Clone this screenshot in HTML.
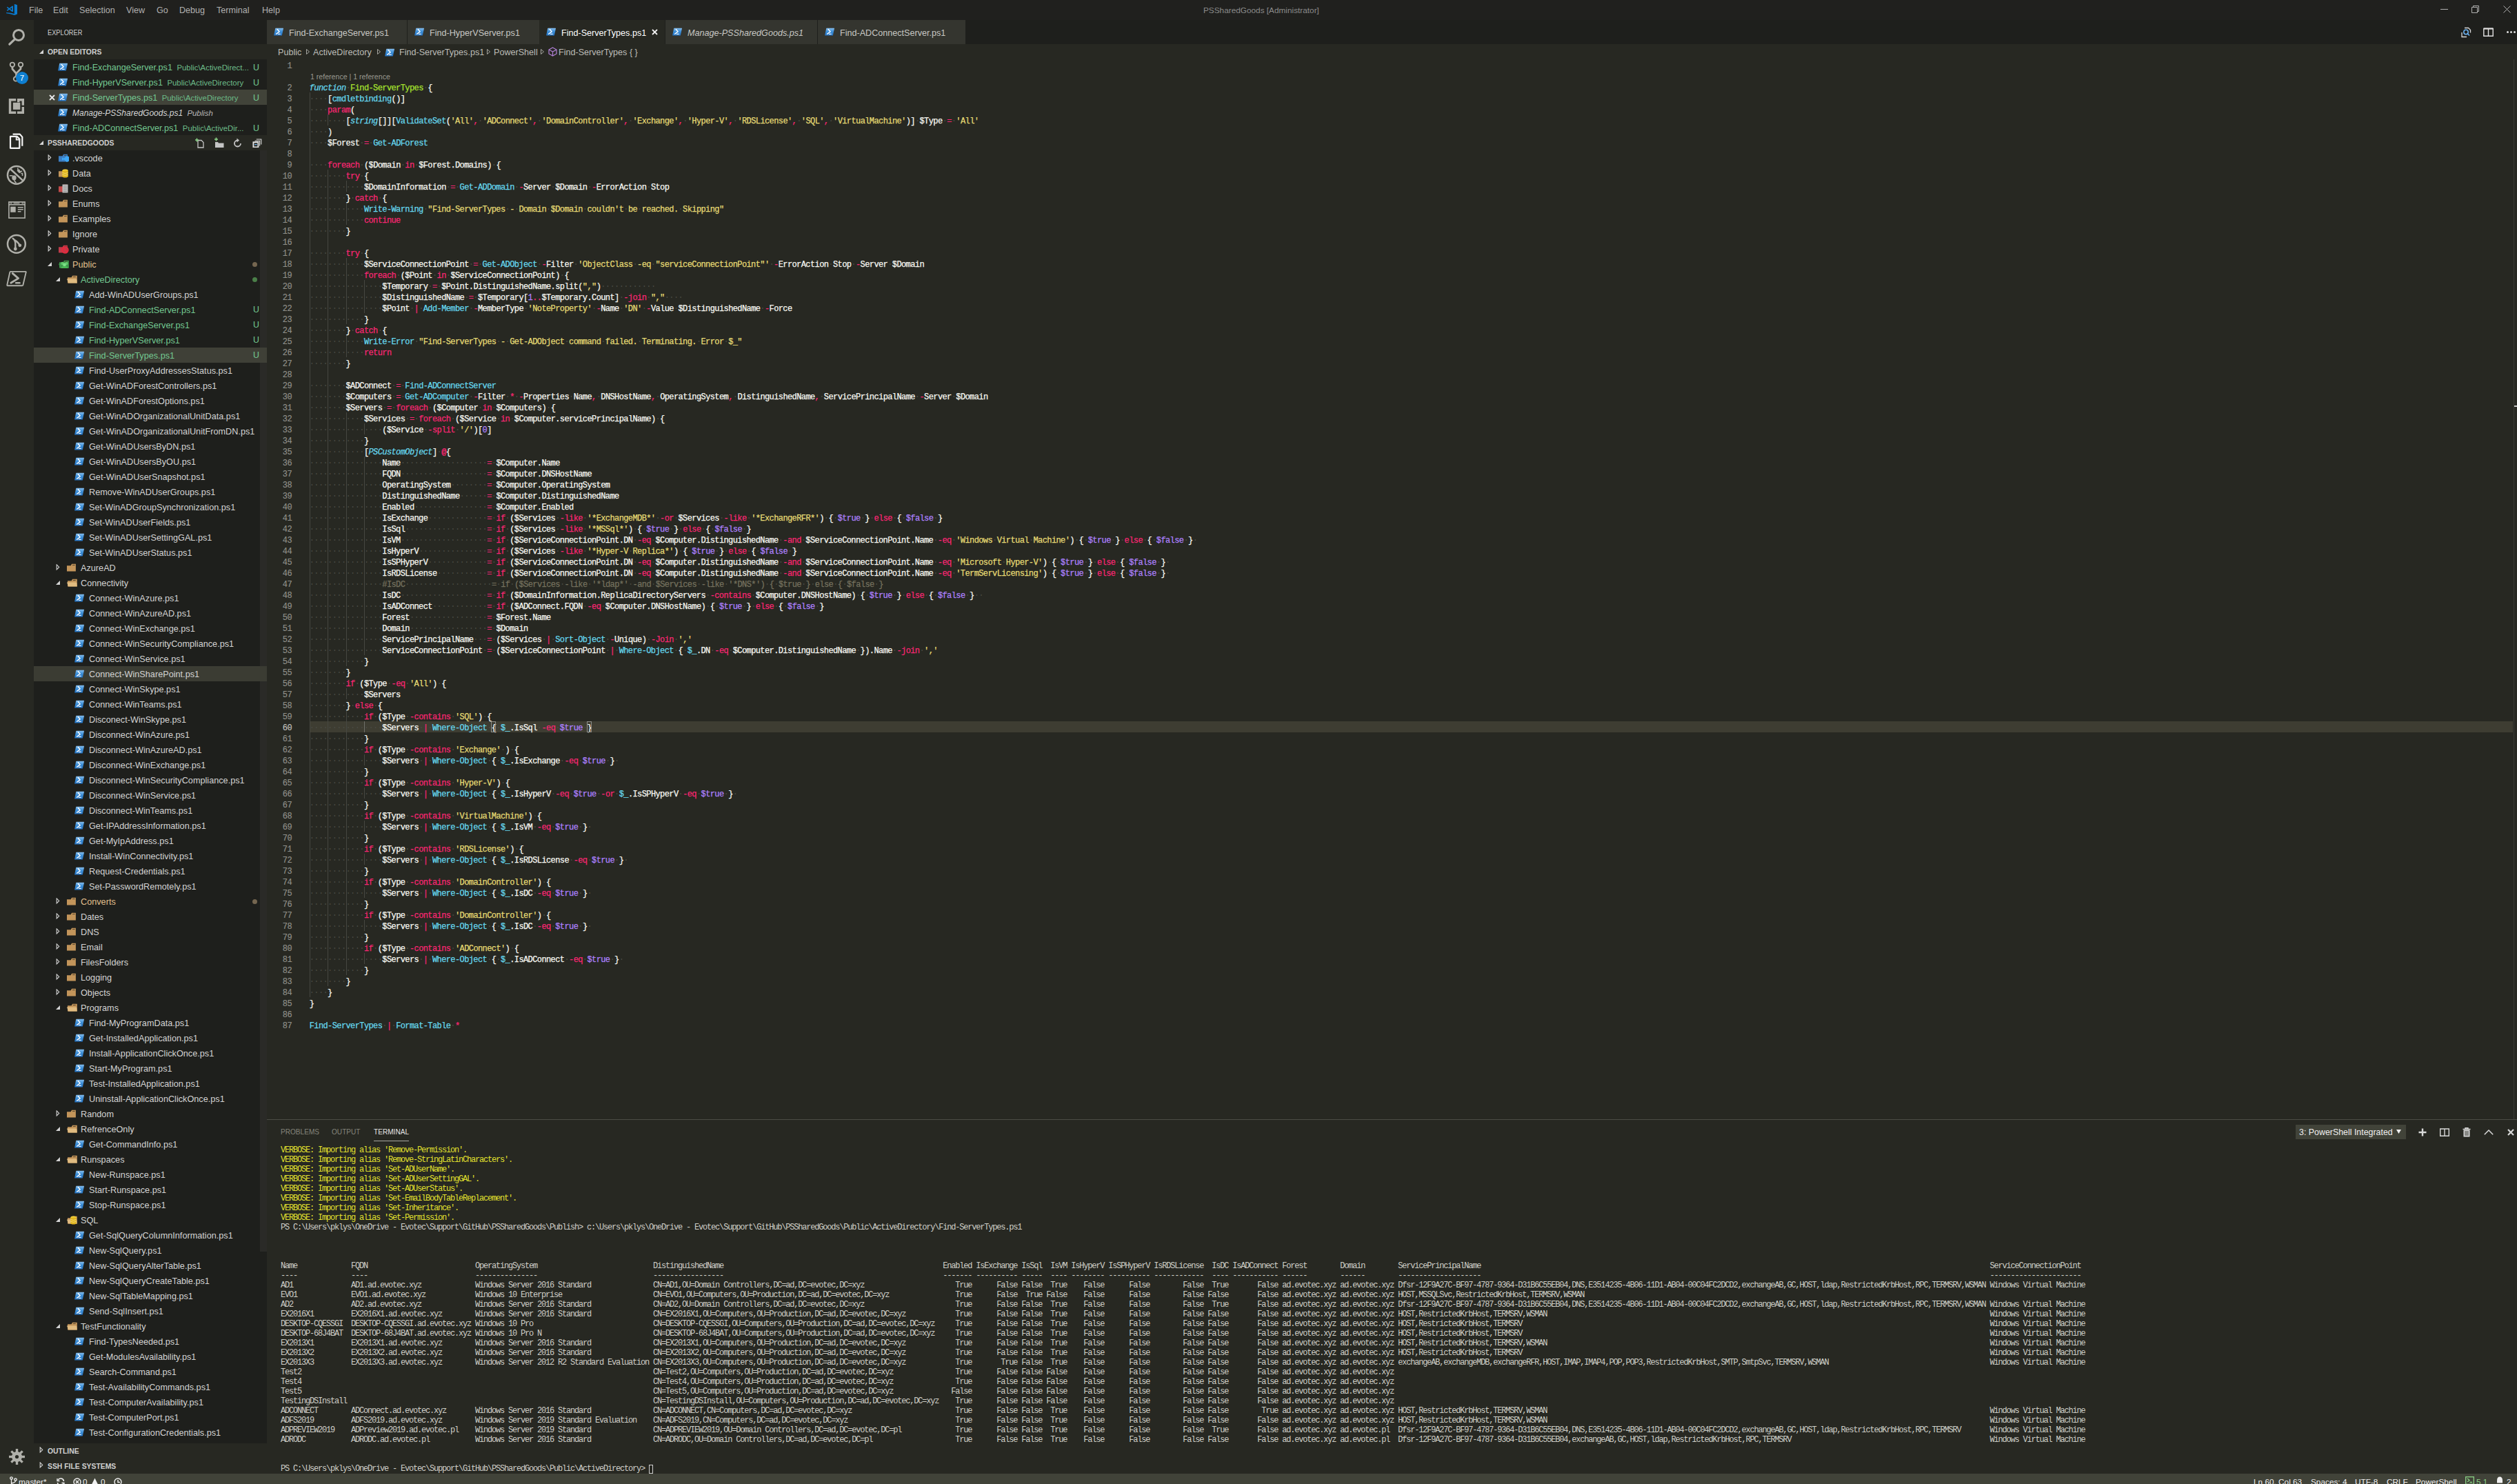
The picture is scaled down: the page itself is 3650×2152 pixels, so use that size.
<!DOCTYPE html><html><head><meta charset="utf-8"><title>VS Code</title><style>
*{margin:0;padding:0;box-sizing:border-box}
html,body{width:3650px;height:2152px;overflow:hidden;background:#272822}
body{position:relative;font-family:"Liberation Sans",sans-serif;color:#cccccc}
.a{position:absolute}
.ic{position:absolute;display:block}
.t{position:absolute;white-space:nowrap;line-height:16px}
.mono{font-family:"Liberation Mono",monospace}
i.w{font-style:normal;color:#4a4b44;-webkit-text-stroke:0}
.cl{position:absolute;left:0;height:16px;white-space:pre;line-height:16px}
.ln{position:absolute;width:40px;text-align:right;color:#90908a;white-space:pre;line-height:16px}
.tl{position:absolute;left:0;white-space:pre;line-height:14px;height:14px}
</style></head><body>
<svg width="0" height="0" style="position:absolute"><defs><linearGradient id="psg" x1="0" y1="0" x2="0" y2="1"><stop offset="0" stop-color="#86bdec"/><stop offset="0.45" stop-color="#3d8fd8"/><stop offset="1" stop-color="#2573c2"/></linearGradient></defs></svg>
<div class="a" style="left:0;top:0;width:3650px;height:29px;background:#20201e"></div>
<svg class="ic" style="left:5px;top:2px" width="25" height="25" viewBox="0 0 25 25"><path d="M15.8 3.9L17.3 4.3L20 5.3V18.6L16.3 19.9L15.8 19.6Z" fill="#0a7bd0"/><path d="M5.3 8.3L13 14.3M5.3 13.4L13 7.3" stroke="#0a7bd0" stroke-width="1.5"/><path d="M12.2 7L14 6.6V15L12.2 14.6Z" fill="#0a7bd0"/><path d="M4 16.3Q9 16 15.8 17.9L16.2 19.9Q9 18 4 17.2Z" fill="#0a7bd0"/></svg>
<div class="t" style="left:42px;top:7px;font-size:12.6px;color:#b0b0b0">File</div>
<div class="t" style="left:77px;top:7px;font-size:12.6px;color:#b0b0b0">Edit</div>
<div class="t" style="left:115px;top:7px;font-size:12.6px;color:#b0b0b0">Selection</div>
<div class="t" style="left:183px;top:7px;font-size:12.6px;color:#b0b0b0">View</div>
<div class="t" style="left:227px;top:7px;font-size:12.6px;color:#b0b0b0">Go</div>
<div class="t" style="left:260px;top:7px;font-size:12.6px;color:#b0b0b0">Debug</div>
<div class="t" style="left:314px;top:7px;font-size:12.6px;color:#b0b0b0">Terminal</div>
<div class="t" style="left:380px;top:7px;font-size:12.6px;color:#b0b0b0">Help</div>
<div class="t" style="left:1745px;top:7px;font-size:11.8px;color:#8c8c8c">PSSharedGoods [Administrator]</div>
<div class="a" style="left:3539px;top:13px;width:11px;height:1px;background:#b0b0b0"></div>
<svg class="ic" style="left:3584px;top:8px" width="11" height="11" viewBox="0 0 11 11"><path d="M0.5 2.5H8.5V10.5H0.5Z M2.5 2.5V0.5H10.5V8.5H8.5" fill="none" stroke="#b0b0b0" stroke-width="1"/></svg>
<svg class="ic" style="left:3630px;top:8px" width="11" height="11" viewBox="0 0 11 11"><path d="M0.5 0.5L10.5 10.5M10.5 0.5L0.5 10.5" stroke="#b0b0b0" stroke-width="1"/></svg>
<div class="a" style="left:0;top:29px;width:49px;height:2108px;background:#272822"></div>
<svg class="ic" style="left:0;top:0" width="49" height="430" viewBox="0 0 49 430"><circle cx="27" cy="50.9" r="7.5" fill="none" stroke="#b0b0aa" stroke-width="3"/><path d="M20.9 57.3L13.8 64.2" stroke="#b0b0aa" stroke-width="3.2" stroke-linecap="round"/><circle cx="17.9" cy="93.8" r="3.2" fill="none" stroke="#b0b0aa" stroke-width="1.9"/><circle cx="30" cy="93.8" r="3.2" fill="none" stroke="#b0b0aa" stroke-width="1.9"/><circle cx="23" cy="114.4" r="3.2" fill="none" stroke="#b0b0aa" stroke-width="1.9"/><path d="M17.9 97V100L23.5 106.5V111M30 97V100L23.5 106.5" fill="none" stroke="#b0b0aa" stroke-width="2.7" stroke-linejoin="round"/><path d="M12.8 143H23.2V146.4H16.2V161.6H23.2V165H12.8Z" fill="#b0b0aa"/><path d="M25 165H35V155H31.6V161.6H25Z" fill="#b0b0aa"/><path d="M25 143H35V152.8H31.6V146.4H28.4V148.2H25Z" fill="#b0b0aa"/><rect x="18.9" y="148.8" width="10.4" height="10.1" fill="#b0b0aa"/><path d="M15 197.9H24.6L28.3 201.6V214.8H15Z" fill="none" stroke="#f4f4f4" stroke-width="2.2" stroke-linejoin="round"/><path d="M23.7 198.5V202.6H28" fill="none" stroke="#f4f4f4" stroke-width="1.8"/><path d="M18.6 194.6H28.8L32.3 198.6V211.7" fill="none" stroke="#f4f4f4" stroke-width="2.2" stroke-linejoin="round"/><circle cx="23.9" cy="253.8" r="12.9" fill="none" stroke="#b0b0aa" stroke-width="2.5"/><path d="M15.5 245.5L33 261.6" stroke="#b0b0aa" stroke-width="2.5"/><ellipse cx="20.5" cy="257.8" rx="3.2" ry="3.6" fill="#b0b0aa"/><path d="M24.5 247.5L27.7 245.2L30.7 249.5L28 251.3Z" fill="#b0b0aa"/><path d="M13.8 254.8H18.5M25.7 243.5L26 247M30.5 251.5H32.5V255M20.5 261.5L23.5 265.5M28.5 250L32 247.8" stroke="#b0b0aa" stroke-width="1.5" fill="none"/><rect x="12.9" y="292.9" width="23.2" height="23.2" fill="none" stroke="#b0b0aa" stroke-width="1.6"/><path d="M12.9 296.8H36.1" stroke="#b0b0aa" stroke-width="1.6"/><path d="M14.5 294.7H17.5M19.5 294.7H28.5M31.5 294.7H34.5" stroke="#b0b0aa" stroke-width="1.3"/><rect x="15.2" y="299.7" width="7.5" height="8.1" fill="#b0b0aa"/><path d="M25.8 300.7H33.8M25.8 303.8H33.8M25.8 306.8H30.5" stroke="#b0b0aa" stroke-width="1.5"/><circle cx="23.9" cy="353.8" r="12.9" fill="none" stroke="#b0b0aa" stroke-width="2.5"/><path d="M18.7 345.7Q22.5 348.5 22.3 354V361M20.8 347.8Q25.5 350 28.8 355.8" fill="none" stroke="#b0b0aa" stroke-width="2.4" stroke-linecap="round"/><circle cx="22.3" cy="361" r="2.4" fill="#b0b0aa"/><circle cx="28.8" cy="355.8" r="2.4" fill="#b0b0aa"/><path d="M15 393.9H37Q38 393.9 37.7 394.9L33.4 413.2Q33.1 414.2 32.1 414.2H11Q10 414.2 10.3 413.2L14.3 394.9Q14.6 393.9 15 393.9Z" fill="none" stroke="#b0b0aa" stroke-width="1.9"/><path d="M18.2 396.4L26.6 403.6L15.8 410.3" fill="none" stroke="#b0b0aa" stroke-width="2.8" stroke-linecap="round" stroke-linejoin="round"/><path d="M23.2 410.3H28.4" stroke="#b0b0aa" stroke-width="2.6" stroke-linecap="round"/></svg>
<div class="a" style="left:23px;top:104px;width:18px;height:18px;border-radius:50%;background:#0e7fd1;color:#fff;font-size:11.5px;text-align:center;line-height:18px">7</div>
<svg class="ic" style="left:13px;top:2101px" width="23" height="23" viewBox="0 0 23 23"><path d="M9.5 1H13.5L14 4L16.5 5.3L19 3.5L21.5 6L19.7 8.5L20.8 11L23 11.5V15.5L20 16L18.8 18.5L20.5 21L18 23.5L15.5 21.7L13 22.8L12.5 25" fill="none"/><circle cx="11.5" cy="11.5" r="7.5" fill="#b0b0aa"/><circle cx="11.5" cy="11.5" r="2.6" fill="#272822"/><rect x="9.8" y="0" width="3.4" height="5" fill="#b0b0aa" transform="rotate(0 11.5 11.5)"/><rect x="9.8" y="0" width="3.4" height="5" fill="#b0b0aa" transform="rotate(45 11.5 11.5)"/><rect x="9.8" y="0" width="3.4" height="5" fill="#b0b0aa" transform="rotate(90 11.5 11.5)"/><rect x="9.8" y="0" width="3.4" height="5" fill="#b0b0aa" transform="rotate(135 11.5 11.5)"/><rect x="9.8" y="0" width="3.4" height="5" fill="#b0b0aa" transform="rotate(180 11.5 11.5)"/><rect x="9.8" y="0" width="3.4" height="5" fill="#b0b0aa" transform="rotate(225 11.5 11.5)"/><rect x="9.8" y="0" width="3.4" height="5" fill="#b0b0aa" transform="rotate(270 11.5 11.5)"/><rect x="9.8" y="0" width="3.4" height="5" fill="#b0b0aa" transform="rotate(315 11.5 11.5)"/></svg>
<div class="a" style="left:49px;top:29px;width:338px;height:2108px;background:#1e1f1c"></div>
<div class="t" style="left:69px;top:39px;font-size:11px;color:#cfcfcf;transform:scaleX(0.84);transform-origin:0 0">EXPLORER</div>
<div class="a" style="left:49px;top:64px;width:338px;height:22px;background:#272822"></div>
<svg class="ic" style="left:56px;top:71px" width="8" height="8" viewBox="0 0 8 8"><path d="M7 1V7H1Z" fill="#d4d4d4"/></svg>
<div class="t" style="left:69px;top:68px;font-size:10.4px;font-weight:bold;color:#d0d0d0">OPEN EDITORS</div>
<svg class="ic" style="left:84px;top:91px" width="15" height="13" viewBox="0 0 15 13"><path d="M2.6 0.8H13.6Q14.1 0.8 14 1.3L11.9 11.1Q11.8 11.6 11.3 11.6H0.6Q0.1 11.6 0.2 11.1L2.2 1.3Q2.3 0.8 2.6 0.8Z" fill="url(#psg)"/><path d="M5.2 2.5L8.1 5.8L3.6 9.3" stroke="#fff" stroke-width="1.4" fill="none" stroke-linecap="round"/><path d="M6.4 9.4H9.3" stroke="#e8f0f8" stroke-width="1.1" stroke-linecap="round"/></svg>
<div class="t" style="left:105px;top:90px;font-size:12.6px;color:#73c991">Find-ExchangeServer.ps1 <span style="font-size:11.4px;color:#6cbb88;margin-left:3px">Public\ActiveDirect...</span></div>
<div class="t" style="left:367px;top:90px;font-size:12.4px;color:#73c991">U</div>
<svg class="ic" style="left:84px;top:113px" width="15" height="13" viewBox="0 0 15 13"><path d="M2.6 0.8H13.6Q14.1 0.8 14 1.3L11.9 11.1Q11.8 11.6 11.3 11.6H0.6Q0.1 11.6 0.2 11.1L2.2 1.3Q2.3 0.8 2.6 0.8Z" fill="url(#psg)"/><path d="M5.2 2.5L8.1 5.8L3.6 9.3" stroke="#fff" stroke-width="1.4" fill="none" stroke-linecap="round"/><path d="M6.4 9.4H9.3" stroke="#e8f0f8" stroke-width="1.1" stroke-linecap="round"/></svg>
<div class="t" style="left:105px;top:112px;font-size:12.6px;color:#73c991">Find-HyperVServer.ps1 <span style="font-size:11.4px;color:#6cbb88;margin-left:3px">Public\ActiveDirectory</span></div>
<div class="t" style="left:367px;top:112px;font-size:12.4px;color:#73c991">U</div>
<div class="a" style="left:49px;top:130px;width:338px;height:22px;background:#414339"></div>
<svg class="ic" style="left:71px;top:137px" width="9" height="9" viewBox="0 0 9 9"><path d="M1 1L8 8M8 1L1 8" stroke="#e8e8e8" stroke-width="1.8"/></svg>
<svg class="ic" style="left:84px;top:135px" width="15" height="13" viewBox="0 0 15 13"><path d="M2.6 0.8H13.6Q14.1 0.8 14 1.3L11.9 11.1Q11.8 11.6 11.3 11.6H0.6Q0.1 11.6 0.2 11.1L2.2 1.3Q2.3 0.8 2.6 0.8Z" fill="url(#psg)"/><path d="M5.2 2.5L8.1 5.8L3.6 9.3" stroke="#fff" stroke-width="1.4" fill="none" stroke-linecap="round"/><path d="M6.4 9.4H9.3" stroke="#e8f0f8" stroke-width="1.1" stroke-linecap="round"/></svg>
<div class="t" style="left:105px;top:134px;font-size:12.6px;color:#73c991">Find-ServerTypes.ps1 <span style="font-size:11.4px;color:#6cbb88;margin-left:3px">Public\ActiveDirectory</span></div>
<div class="t" style="left:367px;top:134px;font-size:12.4px;color:#73c991">U</div>
<svg class="ic" style="left:84px;top:157px" width="15" height="13" viewBox="0 0 15 13"><path d="M2.6 0.8H13.6Q14.1 0.8 14 1.3L11.9 11.1Q11.8 11.6 11.3 11.6H0.6Q0.1 11.6 0.2 11.1L2.2 1.3Q2.3 0.8 2.6 0.8Z" fill="url(#psg)"/><path d="M5.2 2.5L8.1 5.8L3.6 9.3" stroke="#fff" stroke-width="1.4" fill="none" stroke-linecap="round"/><path d="M6.4 9.4H9.3" stroke="#e8f0f8" stroke-width="1.1" stroke-linecap="round"/></svg>
<div class="t" style="left:105px;top:156px;font-size:12px;color:#d4d4d4;font-style:italic">Manage-PSSharedGoods.ps1 <span style="font-size:11.4px;color:#b8b8b8;margin-left:3px">Publish</span></div>
<svg class="ic" style="left:84px;top:179px" width="15" height="13" viewBox="0 0 15 13"><path d="M2.6 0.8H13.6Q14.1 0.8 14 1.3L11.9 11.1Q11.8 11.6 11.3 11.6H0.6Q0.1 11.6 0.2 11.1L2.2 1.3Q2.3 0.8 2.6 0.8Z" fill="url(#psg)"/><path d="M5.2 2.5L8.1 5.8L3.6 9.3" stroke="#fff" stroke-width="1.4" fill="none" stroke-linecap="round"/><path d="M6.4 9.4H9.3" stroke="#e8f0f8" stroke-width="1.1" stroke-linecap="round"/></svg>
<div class="t" style="left:105px;top:178px;font-size:12.6px;color:#73c991">Find-ADConnectServer.ps1 <span style="font-size:11.4px;color:#6cbb88;margin-left:3px">Public\ActiveDir...</span></div>
<div class="t" style="left:367px;top:178px;font-size:12.4px;color:#73c991">U</div>
<div class="a" style="left:49px;top:196px;width:338px;height:22px;background:#272822"></div>
<svg class="ic" style="left:56px;top:203px" width="8" height="8" viewBox="0 0 8 8"><path d="M7 1V7H1Z" fill="#d4d4d4"/></svg>
<div class="t" style="left:69px;top:200px;font-size:10.4px;font-weight:bold;color:#d0d0d0">PSSHAREDGOODS</div>
<svg class="ic" style="left:281px;top:199px" width="16" height="16" viewBox="0 0 16 16"><path d="M6 4.5H11L14 7.5V15H6Z" fill="none" stroke="#c5c5c5" stroke-width="1.3"/><path d="M2 4H7M4.5 1.5V6.5" stroke="#89d185" stroke-width="1.6"/></svg>
<svg class="ic" style="left:310px;top:199px" width="16" height="16" viewBox="0 0 16 16"><path d="M2 7H6L7 8.5H14.5V15H2Z" fill="#c5c5c5"/><path d="M1 3H6M3.5 0.5V5.5" stroke="#89d185" stroke-width="1.6"/></svg>
<svg class="ic" style="left:337px;top:200px" width="15" height="15" viewBox="0 0 15 15"><path d="M12 8A4.5 4.5 0 1 1 7.5 3.5" fill="none" stroke="#c5c5c5" stroke-width="1.8"/><path d="M6.5 0.5L10 3.5L6.5 6.5Z" fill="#c5c5c5"/></svg>
<svg class="ic" style="left:366px;top:200px" width="14" height="14" viewBox="0 0 14 14"><path d="M1.4 6.2H8.4V13.4H1.4Z" fill="none" stroke="#e0e0e0" stroke-width="1.9"/><path d="M3.6 4.2H10.6V11.6M5.8 2H12.8V9.4" fill="none" stroke="#e0e0e0" stroke-width="1.1"/><path d="M3.3 9.6H6.6" stroke="#75beff" stroke-width="1.3"/></svg>
<div class="a" style="left:377px;top:218px;width:10px;height:1597px;background:#2a2a27"></div>
<svg class="ic" style="left:69px;top:224px" width="8" height="10" viewBox="0 0 8 10"><path d="M1.2 0.9L4.7 4.4L1.2 7.9Z" fill="none" stroke="#d4d4d4" stroke-width="1.1"/></svg>
<svg class="ic" style="left:85px;top:223px" width="14" height="13" viewBox="0 0 14 13"><path d="M0 3.2H5.6L7.1 0.8H12.9V11.4H0Z" fill="#3d7fc4"/><path d="M8 2.6H11.7" stroke="#4a3c28" stroke-width="0.9"/></svg>
<svg class="ic" style="left:90px;top:226px" width="10" height="9" viewBox="0 0 10 9"><path d="M7 0L10 1.3V7.7L7 9L2.5 5.3L0.8 6.5L0 6V3L0.8 2.5L2.5 3.7Z" fill="#3ea7f5"/></svg>
<div class="t" style="left:105px;top:222px;font-size:12.7px;color:#d4d4d4">.vscode</div>
<svg class="ic" style="left:69px;top:246px" width="8" height="10" viewBox="0 0 8 10"><path d="M1.2 0.9L4.7 4.4L1.2 7.9Z" fill="none" stroke="#d4d4d4" stroke-width="1.1"/></svg>
<svg class="ic" style="left:85px;top:245px" width="14" height="13" viewBox="0 0 14 13"><path d="M0 3.2H5.6L7.1 0.8H12.9V11.4H0Z" fill="#c3955a"/><path d="M8 2.6H11.7" stroke="#4a3c28" stroke-width="0.9"/></svg>
<svg class="ic" style="left:90px;top:245px" width="9" height="13" viewBox="0 0 9 13"><ellipse cx="4.5" cy="2.5" rx="4.2" ry="2" fill="#f5d33b"/><rect x="0.3" y="2.5" width="8.4" height="8" fill="#e0b51f"/><ellipse cx="4.5" cy="10.5" rx="4.2" ry="2" fill="#e0b51f"/><path d="M0.3 5.5Q4.5 7.5 8.7 5.5M0.3 8.3Q4.5 10.3 8.7 8.3" stroke="#f5e38a" fill="none" stroke-width="0.8"/></svg>
<div class="t" style="left:105px;top:244px;font-size:12.7px;color:#d4d4d4">Data</div>
<svg class="ic" style="left:69px;top:268px" width="8" height="10" viewBox="0 0 8 10"><path d="M1.2 0.9L4.7 4.4L1.2 7.9Z" fill="none" stroke="#d4d4d4" stroke-width="1.1"/></svg>
<svg class="ic" style="left:85px;top:267px" width="14" height="13" viewBox="0 0 14 13"><path d="M0 3.2H5.6L7.1 0.8H12.9V11.4H0Z" fill="#c44b4b"/><path d="M8 2.6H11.7" stroke="#4a3c28" stroke-width="0.9"/></svg>
<svg class="ic" style="left:90px;top:267px" width="9" height="13" viewBox="0 0 9 13"><rect x="0.5" y="0.5" width="8" height="12" fill="#bdbdbd"/><path d="M2 3H7M2 5.5H7M2 8H7M2 10.5H7" stroke="#8a8a8a" stroke-width="0.8"/></svg>
<div class="t" style="left:105px;top:266px;font-size:12.7px;color:#d4d4d4">Docs</div>
<svg class="ic" style="left:69px;top:290px" width="8" height="10" viewBox="0 0 8 10"><path d="M1.2 0.9L4.7 4.4L1.2 7.9Z" fill="none" stroke="#d4d4d4" stroke-width="1.1"/></svg>
<svg class="ic" style="left:85px;top:289px" width="14" height="13" viewBox="0 0 14 13"><path d="M0 3.2H5.6L7.1 0.8H12.9V11.4H0Z" fill="#c3955a"/><path d="M8 2.6H11.7" stroke="#4a3c28" stroke-width="0.9"/></svg>
<div class="t" style="left:105px;top:288px;font-size:12.7px;color:#d4d4d4">Enums</div>
<svg class="ic" style="left:69px;top:312px" width="8" height="10" viewBox="0 0 8 10"><path d="M1.2 0.9L4.7 4.4L1.2 7.9Z" fill="none" stroke="#d4d4d4" stroke-width="1.1"/></svg>
<svg class="ic" style="left:85px;top:311px" width="14" height="13" viewBox="0 0 14 13"><path d="M0 3.2H5.6L7.1 0.8H12.9V11.4H0Z" fill="#c3955a"/><path d="M8 2.6H11.7" stroke="#4a3c28" stroke-width="0.9"/></svg>
<div class="t" style="left:105px;top:310px;font-size:12.7px;color:#d4d4d4">Examples</div>
<svg class="ic" style="left:69px;top:334px" width="8" height="10" viewBox="0 0 8 10"><path d="M1.2 0.9L4.7 4.4L1.2 7.9Z" fill="none" stroke="#d4d4d4" stroke-width="1.1"/></svg>
<svg class="ic" style="left:85px;top:333px" width="14" height="13" viewBox="0 0 14 13"><path d="M0 3.2H5.6L7.1 0.8H12.9V11.4H0Z" fill="#c3955a"/><path d="M8 2.6H11.7" stroke="#4a3c28" stroke-width="0.9"/></svg>
<div class="t" style="left:105px;top:332px;font-size:12.7px;color:#d4d4d4">Ignore</div>
<svg class="ic" style="left:69px;top:356px" width="8" height="10" viewBox="0 0 8 10"><path d="M1.2 0.9L4.7 4.4L1.2 7.9Z" fill="none" stroke="#d4d4d4" stroke-width="1.1"/></svg>
<svg class="ic" style="left:85px;top:355px" width="14" height="13" viewBox="0 0 14 13"><path d="M0 3.2H5.6L7.1 0.8H12.9V11.4H0Z" fill="#c13b4a"/><path d="M8 2.6H11.7" stroke="#4a3c28" stroke-width="0.9"/></svg>
<svg class="ic" style="left:89px;top:357px" width="11" height="11" viewBox="0 0 11 11"><circle cx="5.5" cy="5.5" r="4.3" fill="none" stroke="#e8283d" stroke-width="1.8"/><path d="M2.5 2.5L8.5 8.5" stroke="#e8283d" stroke-width="1.8"/></svg>
<div class="t" style="left:105px;top:354px;font-size:12.7px;color:#d4d4d4">Private</div>
<svg class="ic" style="left:68px;top:379px" width="8" height="8" viewBox="0 0 8 8"><path d="M7 1V7H1Z" fill="#d4d4d4"/></svg>
<svg class="ic" style="left:85px;top:377px" width="16" height="13" viewBox="0 0 16 13"><path d="M1 3.2H6.6L8.1 0.8H14.8V11.5H1Z" fill="#3f9a4d"/><path d="M8.9 2.5H12.8" stroke="#4a3c28" stroke-width="0.9"/><path d="M0 5.4H13L14.2 6.2L14.8 11.6H2.2Z" fill="#3f9a4d"/></svg>
<svg class="ic" style="left:87px;top:378px" width="13" height="12" viewBox="0 0 13 12"><circle cx="3.5" cy="4" r="2.2" fill="#5fc96a"/><circle cx="9.5" cy="4" r="2.2" fill="#5fc96a"/><circle cx="6.5" cy="6" r="2.4" fill="#7be085"/><path d="M1 11Q3.5 6.5 6.5 8.5Q9.5 6.5 12 11Z" fill="#4ab855"/></svg>
<div class="t" style="left:105px;top:376px;font-size:12.7px;color:#e2c08d">Public</div>
<div class="a" style="left:366px;top:380px;width:7px;height:7px;border-radius:50%;background:#756650"></div>
<svg class="ic" style="left:80px;top:401px" width="8" height="8" viewBox="0 0 8 8"><path d="M7 1V7H1Z" fill="#d4d4d4"/></svg>
<svg class="ic" style="left:97px;top:399px" width="16" height="13" viewBox="0 0 16 13"><path d="M1 3.2H6.6L8.1 0.8H14.8V11.5H1Z" fill="#c3955a"/><path d="M8.9 2.5H12.8" stroke="#4a3c28" stroke-width="0.9"/><path d="M0 5.4H13L14.2 6.2L14.8 11.6H2.2Z" fill="#e0bb80"/></svg>
<div class="t" style="left:117px;top:398px;font-size:12.7px;color:#73c991">ActiveDirectory</div>
<div class="a" style="left:366px;top:402px;width:7px;height:7px;border-radius:50%;background:#4a7f48"></div>
<svg class="ic" style="left:108px;top:421px" width="15" height="13" viewBox="0 0 15 13"><path d="M2.6 0.8H13.6Q14.1 0.8 14 1.3L11.9 11.1Q11.8 11.6 11.3 11.6H0.6Q0.1 11.6 0.2 11.1L2.2 1.3Q2.3 0.8 2.6 0.8Z" fill="url(#psg)"/><path d="M5.2 2.5L8.1 5.8L3.6 9.3" stroke="#fff" stroke-width="1.4" fill="none" stroke-linecap="round"/><path d="M6.4 9.4H9.3" stroke="#e8f0f8" stroke-width="1.1" stroke-linecap="round"/></svg>
<div class="t" style="left:129px;top:420px;font-size:12.7px;color:#d4d4d4">Add-WinADUserGroups.ps1</div>
<svg class="ic" style="left:108px;top:443px" width="15" height="13" viewBox="0 0 15 13"><path d="M2.6 0.8H13.6Q14.1 0.8 14 1.3L11.9 11.1Q11.8 11.6 11.3 11.6H0.6Q0.1 11.6 0.2 11.1L2.2 1.3Q2.3 0.8 2.6 0.8Z" fill="url(#psg)"/><path d="M5.2 2.5L8.1 5.8L3.6 9.3" stroke="#fff" stroke-width="1.4" fill="none" stroke-linecap="round"/><path d="M6.4 9.4H9.3" stroke="#e8f0f8" stroke-width="1.1" stroke-linecap="round"/></svg>
<div class="t" style="left:129px;top:442px;font-size:12.7px;color:#73c991">Find-ADConnectServer.ps1</div>
<div class="t" style="left:367px;top:441px;font-size:12.4px;color:#73c991">U</div>
<svg class="ic" style="left:108px;top:465px" width="15" height="13" viewBox="0 0 15 13"><path d="M2.6 0.8H13.6Q14.1 0.8 14 1.3L11.9 11.1Q11.8 11.6 11.3 11.6H0.6Q0.1 11.6 0.2 11.1L2.2 1.3Q2.3 0.8 2.6 0.8Z" fill="url(#psg)"/><path d="M5.2 2.5L8.1 5.8L3.6 9.3" stroke="#fff" stroke-width="1.4" fill="none" stroke-linecap="round"/><path d="M6.4 9.4H9.3" stroke="#e8f0f8" stroke-width="1.1" stroke-linecap="round"/></svg>
<div class="t" style="left:129px;top:464px;font-size:12.7px;color:#73c991">Find-ExchangeServer.ps1</div>
<div class="t" style="left:367px;top:463px;font-size:12.4px;color:#73c991">U</div>
<svg class="ic" style="left:108px;top:487px" width="15" height="13" viewBox="0 0 15 13"><path d="M2.6 0.8H13.6Q14.1 0.8 14 1.3L11.9 11.1Q11.8 11.6 11.3 11.6H0.6Q0.1 11.6 0.2 11.1L2.2 1.3Q2.3 0.8 2.6 0.8Z" fill="url(#psg)"/><path d="M5.2 2.5L8.1 5.8L3.6 9.3" stroke="#fff" stroke-width="1.4" fill="none" stroke-linecap="round"/><path d="M6.4 9.4H9.3" stroke="#e8f0f8" stroke-width="1.1" stroke-linecap="round"/></svg>
<div class="t" style="left:129px;top:486px;font-size:12.7px;color:#73c991">Find-HyperVServer.ps1</div>
<div class="t" style="left:367px;top:485px;font-size:12.4px;color:#73c991">U</div>
<div class="a" style="left:49px;top:504px;width:338px;height:22px;background:#3f4037"></div>
<svg class="ic" style="left:108px;top:509px" width="15" height="13" viewBox="0 0 15 13"><path d="M2.6 0.8H13.6Q14.1 0.8 14 1.3L11.9 11.1Q11.8 11.6 11.3 11.6H0.6Q0.1 11.6 0.2 11.1L2.2 1.3Q2.3 0.8 2.6 0.8Z" fill="url(#psg)"/><path d="M5.2 2.5L8.1 5.8L3.6 9.3" stroke="#fff" stroke-width="1.4" fill="none" stroke-linecap="round"/><path d="M6.4 9.4H9.3" stroke="#e8f0f8" stroke-width="1.1" stroke-linecap="round"/></svg>
<div class="t" style="left:129px;top:508px;font-size:12.7px;color:#73c991">Find-ServerTypes.ps1</div>
<div class="t" style="left:367px;top:507px;font-size:12.4px;color:#73c991">U</div>
<svg class="ic" style="left:108px;top:531px" width="15" height="13" viewBox="0 0 15 13"><path d="M2.6 0.8H13.6Q14.1 0.8 14 1.3L11.9 11.1Q11.8 11.6 11.3 11.6H0.6Q0.1 11.6 0.2 11.1L2.2 1.3Q2.3 0.8 2.6 0.8Z" fill="url(#psg)"/><path d="M5.2 2.5L8.1 5.8L3.6 9.3" stroke="#fff" stroke-width="1.4" fill="none" stroke-linecap="round"/><path d="M6.4 9.4H9.3" stroke="#e8f0f8" stroke-width="1.1" stroke-linecap="round"/></svg>
<div class="t" style="left:129px;top:530px;font-size:12.7px;color:#d4d4d4">Find-UserProxyAddressesStatus.ps1</div>
<svg class="ic" style="left:108px;top:553px" width="15" height="13" viewBox="0 0 15 13"><path d="M2.6 0.8H13.6Q14.1 0.8 14 1.3L11.9 11.1Q11.8 11.6 11.3 11.6H0.6Q0.1 11.6 0.2 11.1L2.2 1.3Q2.3 0.8 2.6 0.8Z" fill="url(#psg)"/><path d="M5.2 2.5L8.1 5.8L3.6 9.3" stroke="#fff" stroke-width="1.4" fill="none" stroke-linecap="round"/><path d="M6.4 9.4H9.3" stroke="#e8f0f8" stroke-width="1.1" stroke-linecap="round"/></svg>
<div class="t" style="left:129px;top:552px;font-size:12.7px;color:#d4d4d4">Get-WinADForestControllers.ps1</div>
<svg class="ic" style="left:108px;top:575px" width="15" height="13" viewBox="0 0 15 13"><path d="M2.6 0.8H13.6Q14.1 0.8 14 1.3L11.9 11.1Q11.8 11.6 11.3 11.6H0.6Q0.1 11.6 0.2 11.1L2.2 1.3Q2.3 0.8 2.6 0.8Z" fill="url(#psg)"/><path d="M5.2 2.5L8.1 5.8L3.6 9.3" stroke="#fff" stroke-width="1.4" fill="none" stroke-linecap="round"/><path d="M6.4 9.4H9.3" stroke="#e8f0f8" stroke-width="1.1" stroke-linecap="round"/></svg>
<div class="t" style="left:129px;top:574px;font-size:12.7px;color:#d4d4d4">Get-WinADForestOptions.ps1</div>
<svg class="ic" style="left:108px;top:597px" width="15" height="13" viewBox="0 0 15 13"><path d="M2.6 0.8H13.6Q14.1 0.8 14 1.3L11.9 11.1Q11.8 11.6 11.3 11.6H0.6Q0.1 11.6 0.2 11.1L2.2 1.3Q2.3 0.8 2.6 0.8Z" fill="url(#psg)"/><path d="M5.2 2.5L8.1 5.8L3.6 9.3" stroke="#fff" stroke-width="1.4" fill="none" stroke-linecap="round"/><path d="M6.4 9.4H9.3" stroke="#e8f0f8" stroke-width="1.1" stroke-linecap="round"/></svg>
<div class="t" style="left:129px;top:596px;font-size:12.7px;color:#d4d4d4">Get-WinADOrganizationalUnitData.ps1</div>
<svg class="ic" style="left:108px;top:619px" width="15" height="13" viewBox="0 0 15 13"><path d="M2.6 0.8H13.6Q14.1 0.8 14 1.3L11.9 11.1Q11.8 11.6 11.3 11.6H0.6Q0.1 11.6 0.2 11.1L2.2 1.3Q2.3 0.8 2.6 0.8Z" fill="url(#psg)"/><path d="M5.2 2.5L8.1 5.8L3.6 9.3" stroke="#fff" stroke-width="1.4" fill="none" stroke-linecap="round"/><path d="M6.4 9.4H9.3" stroke="#e8f0f8" stroke-width="1.1" stroke-linecap="round"/></svg>
<div class="t" style="left:129px;top:618px;font-size:12.7px;color:#d4d4d4">Get-WinADOrganizationalUnitFromDN.ps1</div>
<svg class="ic" style="left:108px;top:641px" width="15" height="13" viewBox="0 0 15 13"><path d="M2.6 0.8H13.6Q14.1 0.8 14 1.3L11.9 11.1Q11.8 11.6 11.3 11.6H0.6Q0.1 11.6 0.2 11.1L2.2 1.3Q2.3 0.8 2.6 0.8Z" fill="url(#psg)"/><path d="M5.2 2.5L8.1 5.8L3.6 9.3" stroke="#fff" stroke-width="1.4" fill="none" stroke-linecap="round"/><path d="M6.4 9.4H9.3" stroke="#e8f0f8" stroke-width="1.1" stroke-linecap="round"/></svg>
<div class="t" style="left:129px;top:640px;font-size:12.7px;color:#d4d4d4">Get-WinADUsersByDN.ps1</div>
<svg class="ic" style="left:108px;top:663px" width="15" height="13" viewBox="0 0 15 13"><path d="M2.6 0.8H13.6Q14.1 0.8 14 1.3L11.9 11.1Q11.8 11.6 11.3 11.6H0.6Q0.1 11.6 0.2 11.1L2.2 1.3Q2.3 0.8 2.6 0.8Z" fill="url(#psg)"/><path d="M5.2 2.5L8.1 5.8L3.6 9.3" stroke="#fff" stroke-width="1.4" fill="none" stroke-linecap="round"/><path d="M6.4 9.4H9.3" stroke="#e8f0f8" stroke-width="1.1" stroke-linecap="round"/></svg>
<div class="t" style="left:129px;top:662px;font-size:12.7px;color:#d4d4d4">Get-WinADUsersByOU.ps1</div>
<svg class="ic" style="left:108px;top:685px" width="15" height="13" viewBox="0 0 15 13"><path d="M2.6 0.8H13.6Q14.1 0.8 14 1.3L11.9 11.1Q11.8 11.6 11.3 11.6H0.6Q0.1 11.6 0.2 11.1L2.2 1.3Q2.3 0.8 2.6 0.8Z" fill="url(#psg)"/><path d="M5.2 2.5L8.1 5.8L3.6 9.3" stroke="#fff" stroke-width="1.4" fill="none" stroke-linecap="round"/><path d="M6.4 9.4H9.3" stroke="#e8f0f8" stroke-width="1.1" stroke-linecap="round"/></svg>
<div class="t" style="left:129px;top:684px;font-size:12.7px;color:#d4d4d4">Get-WinADUserSnapshot.ps1</div>
<svg class="ic" style="left:108px;top:707px" width="15" height="13" viewBox="0 0 15 13"><path d="M2.6 0.8H13.6Q14.1 0.8 14 1.3L11.9 11.1Q11.8 11.6 11.3 11.6H0.6Q0.1 11.6 0.2 11.1L2.2 1.3Q2.3 0.8 2.6 0.8Z" fill="url(#psg)"/><path d="M5.2 2.5L8.1 5.8L3.6 9.3" stroke="#fff" stroke-width="1.4" fill="none" stroke-linecap="round"/><path d="M6.4 9.4H9.3" stroke="#e8f0f8" stroke-width="1.1" stroke-linecap="round"/></svg>
<div class="t" style="left:129px;top:706px;font-size:12.7px;color:#d4d4d4">Remove-WinADUserGroups.ps1</div>
<svg class="ic" style="left:108px;top:729px" width="15" height="13" viewBox="0 0 15 13"><path d="M2.6 0.8H13.6Q14.1 0.8 14 1.3L11.9 11.1Q11.8 11.6 11.3 11.6H0.6Q0.1 11.6 0.2 11.1L2.2 1.3Q2.3 0.8 2.6 0.8Z" fill="url(#psg)"/><path d="M5.2 2.5L8.1 5.8L3.6 9.3" stroke="#fff" stroke-width="1.4" fill="none" stroke-linecap="round"/><path d="M6.4 9.4H9.3" stroke="#e8f0f8" stroke-width="1.1" stroke-linecap="round"/></svg>
<div class="t" style="left:129px;top:728px;font-size:12.7px;color:#d4d4d4">Set-WinADGroupSynchronization.ps1</div>
<svg class="ic" style="left:108px;top:751px" width="15" height="13" viewBox="0 0 15 13"><path d="M2.6 0.8H13.6Q14.1 0.8 14 1.3L11.9 11.1Q11.8 11.6 11.3 11.6H0.6Q0.1 11.6 0.2 11.1L2.2 1.3Q2.3 0.8 2.6 0.8Z" fill="url(#psg)"/><path d="M5.2 2.5L8.1 5.8L3.6 9.3" stroke="#fff" stroke-width="1.4" fill="none" stroke-linecap="round"/><path d="M6.4 9.4H9.3" stroke="#e8f0f8" stroke-width="1.1" stroke-linecap="round"/></svg>
<div class="t" style="left:129px;top:750px;font-size:12.7px;color:#d4d4d4">Set-WinADUserFields.ps1</div>
<svg class="ic" style="left:108px;top:773px" width="15" height="13" viewBox="0 0 15 13"><path d="M2.6 0.8H13.6Q14.1 0.8 14 1.3L11.9 11.1Q11.8 11.6 11.3 11.6H0.6Q0.1 11.6 0.2 11.1L2.2 1.3Q2.3 0.8 2.6 0.8Z" fill="url(#psg)"/><path d="M5.2 2.5L8.1 5.8L3.6 9.3" stroke="#fff" stroke-width="1.4" fill="none" stroke-linecap="round"/><path d="M6.4 9.4H9.3" stroke="#e8f0f8" stroke-width="1.1" stroke-linecap="round"/></svg>
<div class="t" style="left:129px;top:772px;font-size:12.7px;color:#d4d4d4">Set-WinADUserSettingGAL.ps1</div>
<svg class="ic" style="left:108px;top:795px" width="15" height="13" viewBox="0 0 15 13"><path d="M2.6 0.8H13.6Q14.1 0.8 14 1.3L11.9 11.1Q11.8 11.6 11.3 11.6H0.6Q0.1 11.6 0.2 11.1L2.2 1.3Q2.3 0.8 2.6 0.8Z" fill="url(#psg)"/><path d="M5.2 2.5L8.1 5.8L3.6 9.3" stroke="#fff" stroke-width="1.4" fill="none" stroke-linecap="round"/><path d="M6.4 9.4H9.3" stroke="#e8f0f8" stroke-width="1.1" stroke-linecap="round"/></svg>
<div class="t" style="left:129px;top:794px;font-size:12.7px;color:#d4d4d4">Set-WinADUserStatus.ps1</div>
<svg class="ic" style="left:81px;top:818px" width="8" height="10" viewBox="0 0 8 10"><path d="M1.2 0.9L4.7 4.4L1.2 7.9Z" fill="none" stroke="#d4d4d4" stroke-width="1.1"/></svg>
<svg class="ic" style="left:97px;top:817px" width="14" height="13" viewBox="0 0 14 13"><path d="M0 3.2H5.6L7.1 0.8H12.9V11.4H0Z" fill="#c3955a"/><path d="M8 2.6H11.7" stroke="#4a3c28" stroke-width="0.9"/></svg>
<div class="t" style="left:117px;top:816px;font-size:12.7px;color:#d4d4d4">AzureAD</div>
<svg class="ic" style="left:80px;top:841px" width="8" height="8" viewBox="0 0 8 8"><path d="M7 1V7H1Z" fill="#d4d4d4"/></svg>
<svg class="ic" style="left:97px;top:839px" width="16" height="13" viewBox="0 0 16 13"><path d="M1 3.2H6.6L8.1 0.8H14.8V11.5H1Z" fill="#c3955a"/><path d="M8.9 2.5H12.8" stroke="#4a3c28" stroke-width="0.9"/><path d="M0 5.4H13L14.2 6.2L14.8 11.6H2.2Z" fill="#e0bb80"/></svg>
<div class="t" style="left:117px;top:838px;font-size:12.7px;color:#d4d4d4">Connectivity</div>
<svg class="ic" style="left:108px;top:861px" width="15" height="13" viewBox="0 0 15 13"><path d="M2.6 0.8H13.6Q14.1 0.8 14 1.3L11.9 11.1Q11.8 11.6 11.3 11.6H0.6Q0.1 11.6 0.2 11.1L2.2 1.3Q2.3 0.8 2.6 0.8Z" fill="url(#psg)"/><path d="M5.2 2.5L8.1 5.8L3.6 9.3" stroke="#fff" stroke-width="1.4" fill="none" stroke-linecap="round"/><path d="M6.4 9.4H9.3" stroke="#e8f0f8" stroke-width="1.1" stroke-linecap="round"/></svg>
<div class="t" style="left:129px;top:860px;font-size:12.7px;color:#d4d4d4">Connect-WinAzure.ps1</div>
<svg class="ic" style="left:108px;top:883px" width="15" height="13" viewBox="0 0 15 13"><path d="M2.6 0.8H13.6Q14.1 0.8 14 1.3L11.9 11.1Q11.8 11.6 11.3 11.6H0.6Q0.1 11.6 0.2 11.1L2.2 1.3Q2.3 0.8 2.6 0.8Z" fill="url(#psg)"/><path d="M5.2 2.5L8.1 5.8L3.6 9.3" stroke="#fff" stroke-width="1.4" fill="none" stroke-linecap="round"/><path d="M6.4 9.4H9.3" stroke="#e8f0f8" stroke-width="1.1" stroke-linecap="round"/></svg>
<div class="t" style="left:129px;top:882px;font-size:12.7px;color:#d4d4d4">Connect-WinAzureAD.ps1</div>
<svg class="ic" style="left:108px;top:905px" width="15" height="13" viewBox="0 0 15 13"><path d="M2.6 0.8H13.6Q14.1 0.8 14 1.3L11.9 11.1Q11.8 11.6 11.3 11.6H0.6Q0.1 11.6 0.2 11.1L2.2 1.3Q2.3 0.8 2.6 0.8Z" fill="url(#psg)"/><path d="M5.2 2.5L8.1 5.8L3.6 9.3" stroke="#fff" stroke-width="1.4" fill="none" stroke-linecap="round"/><path d="M6.4 9.4H9.3" stroke="#e8f0f8" stroke-width="1.1" stroke-linecap="round"/></svg>
<div class="t" style="left:129px;top:904px;font-size:12.7px;color:#d4d4d4">Connect-WinExchange.ps1</div>
<svg class="ic" style="left:108px;top:927px" width="15" height="13" viewBox="0 0 15 13"><path d="M2.6 0.8H13.6Q14.1 0.8 14 1.3L11.9 11.1Q11.8 11.6 11.3 11.6H0.6Q0.1 11.6 0.2 11.1L2.2 1.3Q2.3 0.8 2.6 0.8Z" fill="url(#psg)"/><path d="M5.2 2.5L8.1 5.8L3.6 9.3" stroke="#fff" stroke-width="1.4" fill="none" stroke-linecap="round"/><path d="M6.4 9.4H9.3" stroke="#e8f0f8" stroke-width="1.1" stroke-linecap="round"/></svg>
<div class="t" style="left:129px;top:926px;font-size:12.7px;color:#d4d4d4">Connect-WinSecurityCompliance.ps1</div>
<svg class="ic" style="left:108px;top:949px" width="15" height="13" viewBox="0 0 15 13"><path d="M2.6 0.8H13.6Q14.1 0.8 14 1.3L11.9 11.1Q11.8 11.6 11.3 11.6H0.6Q0.1 11.6 0.2 11.1L2.2 1.3Q2.3 0.8 2.6 0.8Z" fill="url(#psg)"/><path d="M5.2 2.5L8.1 5.8L3.6 9.3" stroke="#fff" stroke-width="1.4" fill="none" stroke-linecap="round"/><path d="M6.4 9.4H9.3" stroke="#e8f0f8" stroke-width="1.1" stroke-linecap="round"/></svg>
<div class="t" style="left:129px;top:948px;font-size:12.7px;color:#d4d4d4">Connect-WinService.ps1</div>
<div class="a" style="left:49px;top:966px;width:338px;height:22px;background:#3b3c33"></div>
<svg class="ic" style="left:108px;top:971px" width="15" height="13" viewBox="0 0 15 13"><path d="M2.6 0.8H13.6Q14.1 0.8 14 1.3L11.9 11.1Q11.8 11.6 11.3 11.6H0.6Q0.1 11.6 0.2 11.1L2.2 1.3Q2.3 0.8 2.6 0.8Z" fill="url(#psg)"/><path d="M5.2 2.5L8.1 5.8L3.6 9.3" stroke="#fff" stroke-width="1.4" fill="none" stroke-linecap="round"/><path d="M6.4 9.4H9.3" stroke="#e8f0f8" stroke-width="1.1" stroke-linecap="round"/></svg>
<div class="t" style="left:129px;top:970px;font-size:12.7px;color:#d4d4d4">Connect-WinSharePoint.ps1</div>
<svg class="ic" style="left:108px;top:993px" width="15" height="13" viewBox="0 0 15 13"><path d="M2.6 0.8H13.6Q14.1 0.8 14 1.3L11.9 11.1Q11.8 11.6 11.3 11.6H0.6Q0.1 11.6 0.2 11.1L2.2 1.3Q2.3 0.8 2.6 0.8Z" fill="url(#psg)"/><path d="M5.2 2.5L8.1 5.8L3.6 9.3" stroke="#fff" stroke-width="1.4" fill="none" stroke-linecap="round"/><path d="M6.4 9.4H9.3" stroke="#e8f0f8" stroke-width="1.1" stroke-linecap="round"/></svg>
<div class="t" style="left:129px;top:992px;font-size:12.7px;color:#d4d4d4">Connect-WinSkype.ps1</div>
<svg class="ic" style="left:108px;top:1015px" width="15" height="13" viewBox="0 0 15 13"><path d="M2.6 0.8H13.6Q14.1 0.8 14 1.3L11.9 11.1Q11.8 11.6 11.3 11.6H0.6Q0.1 11.6 0.2 11.1L2.2 1.3Q2.3 0.8 2.6 0.8Z" fill="url(#psg)"/><path d="M5.2 2.5L8.1 5.8L3.6 9.3" stroke="#fff" stroke-width="1.4" fill="none" stroke-linecap="round"/><path d="M6.4 9.4H9.3" stroke="#e8f0f8" stroke-width="1.1" stroke-linecap="round"/></svg>
<div class="t" style="left:129px;top:1014px;font-size:12.7px;color:#d4d4d4">Connect-WinTeams.ps1</div>
<svg class="ic" style="left:108px;top:1037px" width="15" height="13" viewBox="0 0 15 13"><path d="M2.6 0.8H13.6Q14.1 0.8 14 1.3L11.9 11.1Q11.8 11.6 11.3 11.6H0.6Q0.1 11.6 0.2 11.1L2.2 1.3Q2.3 0.8 2.6 0.8Z" fill="url(#psg)"/><path d="M5.2 2.5L8.1 5.8L3.6 9.3" stroke="#fff" stroke-width="1.4" fill="none" stroke-linecap="round"/><path d="M6.4 9.4H9.3" stroke="#e8f0f8" stroke-width="1.1" stroke-linecap="round"/></svg>
<div class="t" style="left:129px;top:1036px;font-size:12.7px;color:#d4d4d4">Disconect-WinSkype.ps1</div>
<svg class="ic" style="left:108px;top:1059px" width="15" height="13" viewBox="0 0 15 13"><path d="M2.6 0.8H13.6Q14.1 0.8 14 1.3L11.9 11.1Q11.8 11.6 11.3 11.6H0.6Q0.1 11.6 0.2 11.1L2.2 1.3Q2.3 0.8 2.6 0.8Z" fill="url(#psg)"/><path d="M5.2 2.5L8.1 5.8L3.6 9.3" stroke="#fff" stroke-width="1.4" fill="none" stroke-linecap="round"/><path d="M6.4 9.4H9.3" stroke="#e8f0f8" stroke-width="1.1" stroke-linecap="round"/></svg>
<div class="t" style="left:129px;top:1058px;font-size:12.7px;color:#d4d4d4">Disconnect-WinAzure.ps1</div>
<svg class="ic" style="left:108px;top:1081px" width="15" height="13" viewBox="0 0 15 13"><path d="M2.6 0.8H13.6Q14.1 0.8 14 1.3L11.9 11.1Q11.8 11.6 11.3 11.6H0.6Q0.1 11.6 0.2 11.1L2.2 1.3Q2.3 0.8 2.6 0.8Z" fill="url(#psg)"/><path d="M5.2 2.5L8.1 5.8L3.6 9.3" stroke="#fff" stroke-width="1.4" fill="none" stroke-linecap="round"/><path d="M6.4 9.4H9.3" stroke="#e8f0f8" stroke-width="1.1" stroke-linecap="round"/></svg>
<div class="t" style="left:129px;top:1080px;font-size:12.7px;color:#d4d4d4">Disconnect-WinAzureAD.ps1</div>
<svg class="ic" style="left:108px;top:1103px" width="15" height="13" viewBox="0 0 15 13"><path d="M2.6 0.8H13.6Q14.1 0.8 14 1.3L11.9 11.1Q11.8 11.6 11.3 11.6H0.6Q0.1 11.6 0.2 11.1L2.2 1.3Q2.3 0.8 2.6 0.8Z" fill="url(#psg)"/><path d="M5.2 2.5L8.1 5.8L3.6 9.3" stroke="#fff" stroke-width="1.4" fill="none" stroke-linecap="round"/><path d="M6.4 9.4H9.3" stroke="#e8f0f8" stroke-width="1.1" stroke-linecap="round"/></svg>
<div class="t" style="left:129px;top:1102px;font-size:12.7px;color:#d4d4d4">Disconnect-WinExchange.ps1</div>
<svg class="ic" style="left:108px;top:1125px" width="15" height="13" viewBox="0 0 15 13"><path d="M2.6 0.8H13.6Q14.1 0.8 14 1.3L11.9 11.1Q11.8 11.6 11.3 11.6H0.6Q0.1 11.6 0.2 11.1L2.2 1.3Q2.3 0.8 2.6 0.8Z" fill="url(#psg)"/><path d="M5.2 2.5L8.1 5.8L3.6 9.3" stroke="#fff" stroke-width="1.4" fill="none" stroke-linecap="round"/><path d="M6.4 9.4H9.3" stroke="#e8f0f8" stroke-width="1.1" stroke-linecap="round"/></svg>
<div class="t" style="left:129px;top:1124px;font-size:12.7px;color:#d4d4d4">Disconnect-WinSecurityCompliance.ps1</div>
<svg class="ic" style="left:108px;top:1147px" width="15" height="13" viewBox="0 0 15 13"><path d="M2.6 0.8H13.6Q14.1 0.8 14 1.3L11.9 11.1Q11.8 11.6 11.3 11.6H0.6Q0.1 11.6 0.2 11.1L2.2 1.3Q2.3 0.8 2.6 0.8Z" fill="url(#psg)"/><path d="M5.2 2.5L8.1 5.8L3.6 9.3" stroke="#fff" stroke-width="1.4" fill="none" stroke-linecap="round"/><path d="M6.4 9.4H9.3" stroke="#e8f0f8" stroke-width="1.1" stroke-linecap="round"/></svg>
<div class="t" style="left:129px;top:1146px;font-size:12.7px;color:#d4d4d4">Disconnect-WinService.ps1</div>
<svg class="ic" style="left:108px;top:1169px" width="15" height="13" viewBox="0 0 15 13"><path d="M2.6 0.8H13.6Q14.1 0.8 14 1.3L11.9 11.1Q11.8 11.6 11.3 11.6H0.6Q0.1 11.6 0.2 11.1L2.2 1.3Q2.3 0.8 2.6 0.8Z" fill="url(#psg)"/><path d="M5.2 2.5L8.1 5.8L3.6 9.3" stroke="#fff" stroke-width="1.4" fill="none" stroke-linecap="round"/><path d="M6.4 9.4H9.3" stroke="#e8f0f8" stroke-width="1.1" stroke-linecap="round"/></svg>
<div class="t" style="left:129px;top:1168px;font-size:12.7px;color:#d4d4d4">Disconnect-WinTeams.ps1</div>
<svg class="ic" style="left:108px;top:1191px" width="15" height="13" viewBox="0 0 15 13"><path d="M2.6 0.8H13.6Q14.1 0.8 14 1.3L11.9 11.1Q11.8 11.6 11.3 11.6H0.6Q0.1 11.6 0.2 11.1L2.2 1.3Q2.3 0.8 2.6 0.8Z" fill="url(#psg)"/><path d="M5.2 2.5L8.1 5.8L3.6 9.3" stroke="#fff" stroke-width="1.4" fill="none" stroke-linecap="round"/><path d="M6.4 9.4H9.3" stroke="#e8f0f8" stroke-width="1.1" stroke-linecap="round"/></svg>
<div class="t" style="left:129px;top:1190px;font-size:12.7px;color:#d4d4d4">Get-IPAddressInformation.ps1</div>
<svg class="ic" style="left:108px;top:1213px" width="15" height="13" viewBox="0 0 15 13"><path d="M2.6 0.8H13.6Q14.1 0.8 14 1.3L11.9 11.1Q11.8 11.6 11.3 11.6H0.6Q0.1 11.6 0.2 11.1L2.2 1.3Q2.3 0.8 2.6 0.8Z" fill="url(#psg)"/><path d="M5.2 2.5L8.1 5.8L3.6 9.3" stroke="#fff" stroke-width="1.4" fill="none" stroke-linecap="round"/><path d="M6.4 9.4H9.3" stroke="#e8f0f8" stroke-width="1.1" stroke-linecap="round"/></svg>
<div class="t" style="left:129px;top:1212px;font-size:12.7px;color:#d4d4d4">Get-MyIpAddress.ps1</div>
<svg class="ic" style="left:108px;top:1235px" width="15" height="13" viewBox="0 0 15 13"><path d="M2.6 0.8H13.6Q14.1 0.8 14 1.3L11.9 11.1Q11.8 11.6 11.3 11.6H0.6Q0.1 11.6 0.2 11.1L2.2 1.3Q2.3 0.8 2.6 0.8Z" fill="url(#psg)"/><path d="M5.2 2.5L8.1 5.8L3.6 9.3" stroke="#fff" stroke-width="1.4" fill="none" stroke-linecap="round"/><path d="M6.4 9.4H9.3" stroke="#e8f0f8" stroke-width="1.1" stroke-linecap="round"/></svg>
<div class="t" style="left:129px;top:1234px;font-size:12.7px;color:#d4d4d4">Install-WinConnectivity.ps1</div>
<svg class="ic" style="left:108px;top:1257px" width="15" height="13" viewBox="0 0 15 13"><path d="M2.6 0.8H13.6Q14.1 0.8 14 1.3L11.9 11.1Q11.8 11.6 11.3 11.6H0.6Q0.1 11.6 0.2 11.1L2.2 1.3Q2.3 0.8 2.6 0.8Z" fill="url(#psg)"/><path d="M5.2 2.5L8.1 5.8L3.6 9.3" stroke="#fff" stroke-width="1.4" fill="none" stroke-linecap="round"/><path d="M6.4 9.4H9.3" stroke="#e8f0f8" stroke-width="1.1" stroke-linecap="round"/></svg>
<div class="t" style="left:129px;top:1256px;font-size:12.7px;color:#d4d4d4">Request-Credentials.ps1</div>
<svg class="ic" style="left:108px;top:1279px" width="15" height="13" viewBox="0 0 15 13"><path d="M2.6 0.8H13.6Q14.1 0.8 14 1.3L11.9 11.1Q11.8 11.6 11.3 11.6H0.6Q0.1 11.6 0.2 11.1L2.2 1.3Q2.3 0.8 2.6 0.8Z" fill="url(#psg)"/><path d="M5.2 2.5L8.1 5.8L3.6 9.3" stroke="#fff" stroke-width="1.4" fill="none" stroke-linecap="round"/><path d="M6.4 9.4H9.3" stroke="#e8f0f8" stroke-width="1.1" stroke-linecap="round"/></svg>
<div class="t" style="left:129px;top:1278px;font-size:12.7px;color:#d4d4d4">Set-PasswordRemotely.ps1</div>
<svg class="ic" style="left:81px;top:1302px" width="8" height="10" viewBox="0 0 8 10"><path d="M1.2 0.9L4.7 4.4L1.2 7.9Z" fill="none" stroke="#d4d4d4" stroke-width="1.1"/></svg>
<svg class="ic" style="left:97px;top:1301px" width="14" height="13" viewBox="0 0 14 13"><path d="M0 3.2H5.6L7.1 0.8H12.9V11.4H0Z" fill="#c3955a"/><path d="M8 2.6H11.7" stroke="#4a3c28" stroke-width="0.9"/></svg>
<div class="t" style="left:117px;top:1300px;font-size:12.7px;color:#e2c08d">Converts</div>
<div class="a" style="left:366px;top:1304px;width:7px;height:7px;border-radius:50%;background:#756650"></div>
<svg class="ic" style="left:81px;top:1324px" width="8" height="10" viewBox="0 0 8 10"><path d="M1.2 0.9L4.7 4.4L1.2 7.9Z" fill="none" stroke="#d4d4d4" stroke-width="1.1"/></svg>
<svg class="ic" style="left:97px;top:1323px" width="14" height="13" viewBox="0 0 14 13"><path d="M0 3.2H5.6L7.1 0.8H12.9V11.4H0Z" fill="#c3955a"/><path d="M8 2.6H11.7" stroke="#4a3c28" stroke-width="0.9"/></svg>
<div class="t" style="left:117px;top:1322px;font-size:12.7px;color:#d4d4d4">Dates</div>
<svg class="ic" style="left:81px;top:1346px" width="8" height="10" viewBox="0 0 8 10"><path d="M1.2 0.9L4.7 4.4L1.2 7.9Z" fill="none" stroke="#d4d4d4" stroke-width="1.1"/></svg>
<svg class="ic" style="left:97px;top:1345px" width="14" height="13" viewBox="0 0 14 13"><path d="M0 3.2H5.6L7.1 0.8H12.9V11.4H0Z" fill="#c3955a"/><path d="M8 2.6H11.7" stroke="#4a3c28" stroke-width="0.9"/></svg>
<div class="t" style="left:117px;top:1344px;font-size:12.7px;color:#d4d4d4">DNS</div>
<svg class="ic" style="left:81px;top:1368px" width="8" height="10" viewBox="0 0 8 10"><path d="M1.2 0.9L4.7 4.4L1.2 7.9Z" fill="none" stroke="#d4d4d4" stroke-width="1.1"/></svg>
<svg class="ic" style="left:97px;top:1367px" width="14" height="13" viewBox="0 0 14 13"><path d="M0 3.2H5.6L7.1 0.8H12.9V11.4H0Z" fill="#c3955a"/><path d="M8 2.6H11.7" stroke="#4a3c28" stroke-width="0.9"/></svg>
<div class="t" style="left:117px;top:1366px;font-size:12.7px;color:#d4d4d4">Email</div>
<svg class="ic" style="left:81px;top:1390px" width="8" height="10" viewBox="0 0 8 10"><path d="M1.2 0.9L4.7 4.4L1.2 7.9Z" fill="none" stroke="#d4d4d4" stroke-width="1.1"/></svg>
<svg class="ic" style="left:97px;top:1389px" width="14" height="13" viewBox="0 0 14 13"><path d="M0 3.2H5.6L7.1 0.8H12.9V11.4H0Z" fill="#c3955a"/><path d="M8 2.6H11.7" stroke="#4a3c28" stroke-width="0.9"/></svg>
<div class="t" style="left:117px;top:1388px;font-size:12.7px;color:#d4d4d4">FilesFolders</div>
<svg class="ic" style="left:81px;top:1412px" width="8" height="10" viewBox="0 0 8 10"><path d="M1.2 0.9L4.7 4.4L1.2 7.9Z" fill="none" stroke="#d4d4d4" stroke-width="1.1"/></svg>
<svg class="ic" style="left:97px;top:1411px" width="14" height="13" viewBox="0 0 14 13"><path d="M0 3.2H5.6L7.1 0.8H12.9V11.4H0Z" fill="#c3955a"/><path d="M8 2.6H11.7" stroke="#4a3c28" stroke-width="0.9"/></svg>
<div class="t" style="left:117px;top:1410px;font-size:12.7px;color:#d4d4d4">Logging</div>
<svg class="ic" style="left:81px;top:1434px" width="8" height="10" viewBox="0 0 8 10"><path d="M1.2 0.9L4.7 4.4L1.2 7.9Z" fill="none" stroke="#d4d4d4" stroke-width="1.1"/></svg>
<svg class="ic" style="left:97px;top:1433px" width="14" height="13" viewBox="0 0 14 13"><path d="M0 3.2H5.6L7.1 0.8H12.9V11.4H0Z" fill="#c3955a"/><path d="M8 2.6H11.7" stroke="#4a3c28" stroke-width="0.9"/></svg>
<div class="t" style="left:117px;top:1432px;font-size:12.7px;color:#d4d4d4">Objects</div>
<svg class="ic" style="left:80px;top:1457px" width="8" height="8" viewBox="0 0 8 8"><path d="M7 1V7H1Z" fill="#d4d4d4"/></svg>
<svg class="ic" style="left:97px;top:1455px" width="16" height="13" viewBox="0 0 16 13"><path d="M1 3.2H6.6L8.1 0.8H14.8V11.5H1Z" fill="#c3955a"/><path d="M8.9 2.5H12.8" stroke="#4a3c28" stroke-width="0.9"/><path d="M0 5.4H13L14.2 6.2L14.8 11.6H2.2Z" fill="#e0bb80"/></svg>
<div class="t" style="left:117px;top:1454px;font-size:12.7px;color:#d4d4d4">Programs</div>
<svg class="ic" style="left:108px;top:1477px" width="15" height="13" viewBox="0 0 15 13"><path d="M2.6 0.8H13.6Q14.1 0.8 14 1.3L11.9 11.1Q11.8 11.6 11.3 11.6H0.6Q0.1 11.6 0.2 11.1L2.2 1.3Q2.3 0.8 2.6 0.8Z" fill="url(#psg)"/><path d="M5.2 2.5L8.1 5.8L3.6 9.3" stroke="#fff" stroke-width="1.4" fill="none" stroke-linecap="round"/><path d="M6.4 9.4H9.3" stroke="#e8f0f8" stroke-width="1.1" stroke-linecap="round"/></svg>
<div class="t" style="left:129px;top:1476px;font-size:12.7px;color:#d4d4d4">Find-MyProgramData.ps1</div>
<svg class="ic" style="left:108px;top:1499px" width="15" height="13" viewBox="0 0 15 13"><path d="M2.6 0.8H13.6Q14.1 0.8 14 1.3L11.9 11.1Q11.8 11.6 11.3 11.6H0.6Q0.1 11.6 0.2 11.1L2.2 1.3Q2.3 0.8 2.6 0.8Z" fill="url(#psg)"/><path d="M5.2 2.5L8.1 5.8L3.6 9.3" stroke="#fff" stroke-width="1.4" fill="none" stroke-linecap="round"/><path d="M6.4 9.4H9.3" stroke="#e8f0f8" stroke-width="1.1" stroke-linecap="round"/></svg>
<div class="t" style="left:129px;top:1498px;font-size:12.7px;color:#d4d4d4">Get-InstalledApplication.ps1</div>
<svg class="ic" style="left:108px;top:1521px" width="15" height="13" viewBox="0 0 15 13"><path d="M2.6 0.8H13.6Q14.1 0.8 14 1.3L11.9 11.1Q11.8 11.6 11.3 11.6H0.6Q0.1 11.6 0.2 11.1L2.2 1.3Q2.3 0.8 2.6 0.8Z" fill="url(#psg)"/><path d="M5.2 2.5L8.1 5.8L3.6 9.3" stroke="#fff" stroke-width="1.4" fill="none" stroke-linecap="round"/><path d="M6.4 9.4H9.3" stroke="#e8f0f8" stroke-width="1.1" stroke-linecap="round"/></svg>
<div class="t" style="left:129px;top:1520px;font-size:12.7px;color:#d4d4d4">Install-ApplicationClickOnce.ps1</div>
<svg class="ic" style="left:108px;top:1543px" width="15" height="13" viewBox="0 0 15 13"><path d="M2.6 0.8H13.6Q14.1 0.8 14 1.3L11.9 11.1Q11.8 11.6 11.3 11.6H0.6Q0.1 11.6 0.2 11.1L2.2 1.3Q2.3 0.8 2.6 0.8Z" fill="url(#psg)"/><path d="M5.2 2.5L8.1 5.8L3.6 9.3" stroke="#fff" stroke-width="1.4" fill="none" stroke-linecap="round"/><path d="M6.4 9.4H9.3" stroke="#e8f0f8" stroke-width="1.1" stroke-linecap="round"/></svg>
<div class="t" style="left:129px;top:1542px;font-size:12.7px;color:#d4d4d4">Start-MyProgram.ps1</div>
<svg class="ic" style="left:108px;top:1565px" width="15" height="13" viewBox="0 0 15 13"><path d="M2.6 0.8H13.6Q14.1 0.8 14 1.3L11.9 11.1Q11.8 11.6 11.3 11.6H0.6Q0.1 11.6 0.2 11.1L2.2 1.3Q2.3 0.8 2.6 0.8Z" fill="url(#psg)"/><path d="M5.2 2.5L8.1 5.8L3.6 9.3" stroke="#fff" stroke-width="1.4" fill="none" stroke-linecap="round"/><path d="M6.4 9.4H9.3" stroke="#e8f0f8" stroke-width="1.1" stroke-linecap="round"/></svg>
<div class="t" style="left:129px;top:1564px;font-size:12.7px;color:#d4d4d4">Test-InstalledApplication.ps1</div>
<svg class="ic" style="left:108px;top:1587px" width="15" height="13" viewBox="0 0 15 13"><path d="M2.6 0.8H13.6Q14.1 0.8 14 1.3L11.9 11.1Q11.8 11.6 11.3 11.6H0.6Q0.1 11.6 0.2 11.1L2.2 1.3Q2.3 0.8 2.6 0.8Z" fill="url(#psg)"/><path d="M5.2 2.5L8.1 5.8L3.6 9.3" stroke="#fff" stroke-width="1.4" fill="none" stroke-linecap="round"/><path d="M6.4 9.4H9.3" stroke="#e8f0f8" stroke-width="1.1" stroke-linecap="round"/></svg>
<div class="t" style="left:129px;top:1586px;font-size:12.7px;color:#d4d4d4">Uninstall-ApplicationClickOnce.ps1</div>
<svg class="ic" style="left:81px;top:1610px" width="8" height="10" viewBox="0 0 8 10"><path d="M1.2 0.9L4.7 4.4L1.2 7.9Z" fill="none" stroke="#d4d4d4" stroke-width="1.1"/></svg>
<svg class="ic" style="left:97px;top:1609px" width="14" height="13" viewBox="0 0 14 13"><path d="M0 3.2H5.6L7.1 0.8H12.9V11.4H0Z" fill="#c3955a"/><path d="M8 2.6H11.7" stroke="#4a3c28" stroke-width="0.9"/></svg>
<div class="t" style="left:117px;top:1608px;font-size:12.7px;color:#d4d4d4">Random</div>
<svg class="ic" style="left:80px;top:1633px" width="8" height="8" viewBox="0 0 8 8"><path d="M7 1V7H1Z" fill="#d4d4d4"/></svg>
<svg class="ic" style="left:97px;top:1631px" width="16" height="13" viewBox="0 0 16 13"><path d="M1 3.2H6.6L8.1 0.8H14.8V11.5H1Z" fill="#c3955a"/><path d="M8.9 2.5H12.8" stroke="#4a3c28" stroke-width="0.9"/><path d="M0 5.4H13L14.2 6.2L14.8 11.6H2.2Z" fill="#e0bb80"/></svg>
<div class="t" style="left:117px;top:1630px;font-size:12.7px;color:#d4d4d4">RefrenceOnly</div>
<svg class="ic" style="left:108px;top:1653px" width="15" height="13" viewBox="0 0 15 13"><path d="M2.6 0.8H13.6Q14.1 0.8 14 1.3L11.9 11.1Q11.8 11.6 11.3 11.6H0.6Q0.1 11.6 0.2 11.1L2.2 1.3Q2.3 0.8 2.6 0.8Z" fill="url(#psg)"/><path d="M5.2 2.5L8.1 5.8L3.6 9.3" stroke="#fff" stroke-width="1.4" fill="none" stroke-linecap="round"/><path d="M6.4 9.4H9.3" stroke="#e8f0f8" stroke-width="1.1" stroke-linecap="round"/></svg>
<div class="t" style="left:129px;top:1652px;font-size:12.7px;color:#d4d4d4">Get-CommandInfo.ps1</div>
<svg class="ic" style="left:80px;top:1677px" width="8" height="8" viewBox="0 0 8 8"><path d="M7 1V7H1Z" fill="#d4d4d4"/></svg>
<svg class="ic" style="left:97px;top:1675px" width="16" height="13" viewBox="0 0 16 13"><path d="M1 3.2H6.6L8.1 0.8H14.8V11.5H1Z" fill="#c3955a"/><path d="M8.9 2.5H12.8" stroke="#4a3c28" stroke-width="0.9"/><path d="M0 5.4H13L14.2 6.2L14.8 11.6H2.2Z" fill="#e0bb80"/></svg>
<div class="t" style="left:117px;top:1674px;font-size:12.7px;color:#d4d4d4">Runspaces</div>
<svg class="ic" style="left:108px;top:1697px" width="15" height="13" viewBox="0 0 15 13"><path d="M2.6 0.8H13.6Q14.1 0.8 14 1.3L11.9 11.1Q11.8 11.6 11.3 11.6H0.6Q0.1 11.6 0.2 11.1L2.2 1.3Q2.3 0.8 2.6 0.8Z" fill="url(#psg)"/><path d="M5.2 2.5L8.1 5.8L3.6 9.3" stroke="#fff" stroke-width="1.4" fill="none" stroke-linecap="round"/><path d="M6.4 9.4H9.3" stroke="#e8f0f8" stroke-width="1.1" stroke-linecap="round"/></svg>
<div class="t" style="left:129px;top:1696px;font-size:12.7px;color:#d4d4d4">New-Runspace.ps1</div>
<svg class="ic" style="left:108px;top:1719px" width="15" height="13" viewBox="0 0 15 13"><path d="M2.6 0.8H13.6Q14.1 0.8 14 1.3L11.9 11.1Q11.8 11.6 11.3 11.6H0.6Q0.1 11.6 0.2 11.1L2.2 1.3Q2.3 0.8 2.6 0.8Z" fill="url(#psg)"/><path d="M5.2 2.5L8.1 5.8L3.6 9.3" stroke="#fff" stroke-width="1.4" fill="none" stroke-linecap="round"/><path d="M6.4 9.4H9.3" stroke="#e8f0f8" stroke-width="1.1" stroke-linecap="round"/></svg>
<div class="t" style="left:129px;top:1718px;font-size:12.7px;color:#d4d4d4">Start-Runspace.ps1</div>
<svg class="ic" style="left:108px;top:1741px" width="15" height="13" viewBox="0 0 15 13"><path d="M2.6 0.8H13.6Q14.1 0.8 14 1.3L11.9 11.1Q11.8 11.6 11.3 11.6H0.6Q0.1 11.6 0.2 11.1L2.2 1.3Q2.3 0.8 2.6 0.8Z" fill="url(#psg)"/><path d="M5.2 2.5L8.1 5.8L3.6 9.3" stroke="#fff" stroke-width="1.4" fill="none" stroke-linecap="round"/><path d="M6.4 9.4H9.3" stroke="#e8f0f8" stroke-width="1.1" stroke-linecap="round"/></svg>
<div class="t" style="left:129px;top:1740px;font-size:12.7px;color:#d4d4d4">Stop-Runspace.ps1</div>
<svg class="ic" style="left:80px;top:1765px" width="8" height="8" viewBox="0 0 8 8"><path d="M7 1V7H1Z" fill="#d4d4d4"/></svg>
<svg class="ic" style="left:97px;top:1763px" width="16" height="13" viewBox="0 0 16 13"><path d="M1 3.2H6.6L8.1 0.8H14.8V11.5H1Z" fill="#c3955a"/><path d="M8.9 2.5H12.8" stroke="#4a3c28" stroke-width="0.9"/><path d="M0 5.4H13L14.2 6.2L14.8 11.6H2.2Z" fill="#e0bb80"/></svg>
<svg class="ic" style="left:102px;top:1763px" width="9" height="13" viewBox="0 0 9 13"><ellipse cx="4.5" cy="2.5" rx="4.2" ry="2" fill="#f5d33b"/><rect x="0.3" y="2.5" width="8.4" height="8" fill="#e0b51f"/><ellipse cx="4.5" cy="10.5" rx="4.2" ry="2" fill="#e0b51f"/><path d="M0.3 5.5Q4.5 7.5 8.7 5.5M0.3 8.3Q4.5 10.3 8.7 8.3" stroke="#f5e38a" fill="none" stroke-width="0.8"/></svg>
<div class="t" style="left:117px;top:1762px;font-size:12.7px;color:#d4d4d4">SQL</div>
<svg class="ic" style="left:108px;top:1785px" width="15" height="13" viewBox="0 0 15 13"><path d="M2.6 0.8H13.6Q14.1 0.8 14 1.3L11.9 11.1Q11.8 11.6 11.3 11.6H0.6Q0.1 11.6 0.2 11.1L2.2 1.3Q2.3 0.8 2.6 0.8Z" fill="url(#psg)"/><path d="M5.2 2.5L8.1 5.8L3.6 9.3" stroke="#fff" stroke-width="1.4" fill="none" stroke-linecap="round"/><path d="M6.4 9.4H9.3" stroke="#e8f0f8" stroke-width="1.1" stroke-linecap="round"/></svg>
<div class="t" style="left:129px;top:1784px;font-size:12.7px;color:#d4d4d4">Get-SqlQueryColumnInformation.ps1</div>
<svg class="ic" style="left:108px;top:1807px" width="15" height="13" viewBox="0 0 15 13"><path d="M2.6 0.8H13.6Q14.1 0.8 14 1.3L11.9 11.1Q11.8 11.6 11.3 11.6H0.6Q0.1 11.6 0.2 11.1L2.2 1.3Q2.3 0.8 2.6 0.8Z" fill="url(#psg)"/><path d="M5.2 2.5L8.1 5.8L3.6 9.3" stroke="#fff" stroke-width="1.4" fill="none" stroke-linecap="round"/><path d="M6.4 9.4H9.3" stroke="#e8f0f8" stroke-width="1.1" stroke-linecap="round"/></svg>
<div class="t" style="left:129px;top:1806px;font-size:12.7px;color:#d4d4d4">New-SqlQuery.ps1</div>
<svg class="ic" style="left:108px;top:1829px" width="15" height="13" viewBox="0 0 15 13"><path d="M2.6 0.8H13.6Q14.1 0.8 14 1.3L11.9 11.1Q11.8 11.6 11.3 11.6H0.6Q0.1 11.6 0.2 11.1L2.2 1.3Q2.3 0.8 2.6 0.8Z" fill="url(#psg)"/><path d="M5.2 2.5L8.1 5.8L3.6 9.3" stroke="#fff" stroke-width="1.4" fill="none" stroke-linecap="round"/><path d="M6.4 9.4H9.3" stroke="#e8f0f8" stroke-width="1.1" stroke-linecap="round"/></svg>
<div class="t" style="left:129px;top:1828px;font-size:12.7px;color:#d4d4d4">New-SqlQueryAlterTable.ps1</div>
<svg class="ic" style="left:108px;top:1851px" width="15" height="13" viewBox="0 0 15 13"><path d="M2.6 0.8H13.6Q14.1 0.8 14 1.3L11.9 11.1Q11.8 11.6 11.3 11.6H0.6Q0.1 11.6 0.2 11.1L2.2 1.3Q2.3 0.8 2.6 0.8Z" fill="url(#psg)"/><path d="M5.2 2.5L8.1 5.8L3.6 9.3" stroke="#fff" stroke-width="1.4" fill="none" stroke-linecap="round"/><path d="M6.4 9.4H9.3" stroke="#e8f0f8" stroke-width="1.1" stroke-linecap="round"/></svg>
<div class="t" style="left:129px;top:1850px;font-size:12.7px;color:#d4d4d4">New-SqlQueryCreateTable.ps1</div>
<svg class="ic" style="left:108px;top:1873px" width="15" height="13" viewBox="0 0 15 13"><path d="M2.6 0.8H13.6Q14.1 0.8 14 1.3L11.9 11.1Q11.8 11.6 11.3 11.6H0.6Q0.1 11.6 0.2 11.1L2.2 1.3Q2.3 0.8 2.6 0.8Z" fill="url(#psg)"/><path d="M5.2 2.5L8.1 5.8L3.6 9.3" stroke="#fff" stroke-width="1.4" fill="none" stroke-linecap="round"/><path d="M6.4 9.4H9.3" stroke="#e8f0f8" stroke-width="1.1" stroke-linecap="round"/></svg>
<div class="t" style="left:129px;top:1872px;font-size:12.7px;color:#d4d4d4">New-SqlTableMapping.ps1</div>
<svg class="ic" style="left:108px;top:1895px" width="15" height="13" viewBox="0 0 15 13"><path d="M2.6 0.8H13.6Q14.1 0.8 14 1.3L11.9 11.1Q11.8 11.6 11.3 11.6H0.6Q0.1 11.6 0.2 11.1L2.2 1.3Q2.3 0.8 2.6 0.8Z" fill="url(#psg)"/><path d="M5.2 2.5L8.1 5.8L3.6 9.3" stroke="#fff" stroke-width="1.4" fill="none" stroke-linecap="round"/><path d="M6.4 9.4H9.3" stroke="#e8f0f8" stroke-width="1.1" stroke-linecap="round"/></svg>
<div class="t" style="left:129px;top:1894px;font-size:12.7px;color:#d4d4d4">Send-SqlInsert.ps1</div>
<svg class="ic" style="left:80px;top:1919px" width="8" height="8" viewBox="0 0 8 8"><path d="M7 1V7H1Z" fill="#d4d4d4"/></svg>
<svg class="ic" style="left:97px;top:1917px" width="16" height="13" viewBox="0 0 16 13"><path d="M1 3.2H6.6L8.1 0.8H14.8V11.5H1Z" fill="#c3955a"/><path d="M8.9 2.5H12.8" stroke="#4a3c28" stroke-width="0.9"/><path d="M0 5.4H13L14.2 6.2L14.8 11.6H2.2Z" fill="#e0bb80"/></svg>
<div class="t" style="left:117px;top:1916px;font-size:12.7px;color:#d4d4d4">TestFunctionality</div>
<svg class="ic" style="left:108px;top:1939px" width="15" height="13" viewBox="0 0 15 13"><path d="M2.6 0.8H13.6Q14.1 0.8 14 1.3L11.9 11.1Q11.8 11.6 11.3 11.6H0.6Q0.1 11.6 0.2 11.1L2.2 1.3Q2.3 0.8 2.6 0.8Z" fill="url(#psg)"/><path d="M5.2 2.5L8.1 5.8L3.6 9.3" stroke="#fff" stroke-width="1.4" fill="none" stroke-linecap="round"/><path d="M6.4 9.4H9.3" stroke="#e8f0f8" stroke-width="1.1" stroke-linecap="round"/></svg>
<div class="t" style="left:129px;top:1938px;font-size:12.7px;color:#d4d4d4">Find-TypesNeeded.ps1</div>
<svg class="ic" style="left:108px;top:1961px" width="15" height="13" viewBox="0 0 15 13"><path d="M2.6 0.8H13.6Q14.1 0.8 14 1.3L11.9 11.1Q11.8 11.6 11.3 11.6H0.6Q0.1 11.6 0.2 11.1L2.2 1.3Q2.3 0.8 2.6 0.8Z" fill="url(#psg)"/><path d="M5.2 2.5L8.1 5.8L3.6 9.3" stroke="#fff" stroke-width="1.4" fill="none" stroke-linecap="round"/><path d="M6.4 9.4H9.3" stroke="#e8f0f8" stroke-width="1.1" stroke-linecap="round"/></svg>
<div class="t" style="left:129px;top:1960px;font-size:12.7px;color:#d4d4d4">Get-ModulesAvailability.ps1</div>
<svg class="ic" style="left:108px;top:1983px" width="15" height="13" viewBox="0 0 15 13"><path d="M2.6 0.8H13.6Q14.1 0.8 14 1.3L11.9 11.1Q11.8 11.6 11.3 11.6H0.6Q0.1 11.6 0.2 11.1L2.2 1.3Q2.3 0.8 2.6 0.8Z" fill="url(#psg)"/><path d="M5.2 2.5L8.1 5.8L3.6 9.3" stroke="#fff" stroke-width="1.4" fill="none" stroke-linecap="round"/><path d="M6.4 9.4H9.3" stroke="#e8f0f8" stroke-width="1.1" stroke-linecap="round"/></svg>
<div class="t" style="left:129px;top:1982px;font-size:12.7px;color:#d4d4d4">Search-Command.ps1</div>
<svg class="ic" style="left:108px;top:2005px" width="15" height="13" viewBox="0 0 15 13"><path d="M2.6 0.8H13.6Q14.1 0.8 14 1.3L11.9 11.1Q11.8 11.6 11.3 11.6H0.6Q0.1 11.6 0.2 11.1L2.2 1.3Q2.3 0.8 2.6 0.8Z" fill="url(#psg)"/><path d="M5.2 2.5L8.1 5.8L3.6 9.3" stroke="#fff" stroke-width="1.4" fill="none" stroke-linecap="round"/><path d="M6.4 9.4H9.3" stroke="#e8f0f8" stroke-width="1.1" stroke-linecap="round"/></svg>
<div class="t" style="left:129px;top:2004px;font-size:12.7px;color:#d4d4d4">Test-AvailabilityCommands.ps1</div>
<svg class="ic" style="left:108px;top:2027px" width="15" height="13" viewBox="0 0 15 13"><path d="M2.6 0.8H13.6Q14.1 0.8 14 1.3L11.9 11.1Q11.8 11.6 11.3 11.6H0.6Q0.1 11.6 0.2 11.1L2.2 1.3Q2.3 0.8 2.6 0.8Z" fill="url(#psg)"/><path d="M5.2 2.5L8.1 5.8L3.6 9.3" stroke="#fff" stroke-width="1.4" fill="none" stroke-linecap="round"/><path d="M6.4 9.4H9.3" stroke="#e8f0f8" stroke-width="1.1" stroke-linecap="round"/></svg>
<div class="t" style="left:129px;top:2026px;font-size:12.7px;color:#d4d4d4">Test-ComputerAvailability.ps1</div>
<svg class="ic" style="left:108px;top:2049px" width="15" height="13" viewBox="0 0 15 13"><path d="M2.6 0.8H13.6Q14.1 0.8 14 1.3L11.9 11.1Q11.8 11.6 11.3 11.6H0.6Q0.1 11.6 0.2 11.1L2.2 1.3Q2.3 0.8 2.6 0.8Z" fill="url(#psg)"/><path d="M5.2 2.5L8.1 5.8L3.6 9.3" stroke="#fff" stroke-width="1.4" fill="none" stroke-linecap="round"/><path d="M6.4 9.4H9.3" stroke="#e8f0f8" stroke-width="1.1" stroke-linecap="round"/></svg>
<div class="t" style="left:129px;top:2048px;font-size:12.7px;color:#d4d4d4">Test-ComputerPort.ps1</div>
<svg class="ic" style="left:108px;top:2071px" width="15" height="13" viewBox="0 0 15 13"><path d="M2.6 0.8H13.6Q14.1 0.8 14 1.3L11.9 11.1Q11.8 11.6 11.3 11.6H0.6Q0.1 11.6 0.2 11.1L2.2 1.3Q2.3 0.8 2.6 0.8Z" fill="url(#psg)"/><path d="M5.2 2.5L8.1 5.8L3.6 9.3" stroke="#fff" stroke-width="1.4" fill="none" stroke-linecap="round"/><path d="M6.4 9.4H9.3" stroke="#e8f0f8" stroke-width="1.1" stroke-linecap="round"/></svg>
<div class="t" style="left:129px;top:2070px;font-size:12.7px;color:#d4d4d4">Test-ConfigurationCredentials.ps1</div>
<div class="a" style="left:49px;top:2093px;width:338px;height:22px;background:#272822"></div>
<svg class="ic" style="left:57px;top:2098px" width="8" height="10" viewBox="0 0 8 10"><path d="M1.2 0.9L4.7 4.4L1.2 7.9Z" fill="none" stroke="#d4d4d4" stroke-width="1.1"/></svg>
<div class="t" style="left:69px;top:2097px;font-size:10.4px;font-weight:bold;color:#d0d0d0">OUTLINE</div>
<div class="a" style="left:49px;top:2115px;width:338px;height:22px;background:#272822"></div>
<svg class="ic" style="left:57px;top:2120px" width="8" height="10" viewBox="0 0 8 10"><path d="M1.2 0.9L4.7 4.4L1.2 7.9Z" fill="none" stroke="#d4d4d4" stroke-width="1.1"/></svg>
<div class="t" style="left:69px;top:2119px;font-size:10.4px;font-weight:bold;color:#d0d0d0">SSH FILE SYSTEMS</div>
<div class="a" style="left:387px;top:29px;width:3263px;height:35px;background:#1e1f1c"></div>
<div class="a" style="left:387px;top:29px;width:203px;height:35px;background:#34352f"></div>
<svg class="ic" style="left:397px;top:40px" width="15" height="13" viewBox="0 0 15 13"><path d="M2.6 0.8H13.6Q14.1 0.8 14 1.3L11.9 11.1Q11.8 11.6 11.3 11.6H0.6Q0.1 11.6 0.2 11.1L2.2 1.3Q2.3 0.8 2.6 0.8Z" fill="url(#psg)"/><path d="M5.2 2.5L8.1 5.8L3.6 9.3" stroke="#fff" stroke-width="1.4" fill="none" stroke-linecap="round"/><path d="M6.4 9.4H9.3" stroke="#e8f0f8" stroke-width="1.1" stroke-linecap="round"/></svg>
<div class="t" style="left:419px;top:40px;font-size:12.6px;color:#c8c8c4;">Find-ExchangeServer.ps1</div>
<div class="a" style="left:591px;top:29px;width:191px;height:35px;background:#34352f"></div>
<svg class="ic" style="left:601px;top:40px" width="15" height="13" viewBox="0 0 15 13"><path d="M2.6 0.8H13.6Q14.1 0.8 14 1.3L11.9 11.1Q11.8 11.6 11.3 11.6H0.6Q0.1 11.6 0.2 11.1L2.2 1.3Q2.3 0.8 2.6 0.8Z" fill="url(#psg)"/><path d="M5.2 2.5L8.1 5.8L3.6 9.3" stroke="#fff" stroke-width="1.4" fill="none" stroke-linecap="round"/><path d="M6.4 9.4H9.3" stroke="#e8f0f8" stroke-width="1.1" stroke-linecap="round"/></svg>
<div class="t" style="left:623px;top:40px;font-size:12.6px;color:#c8c8c4;">Find-HyperVServer.ps1</div>
<div class="a" style="left:782px;top:29px;width:182px;height:35px;background:#272822"></div>
<svg class="ic" style="left:792px;top:40px" width="15" height="13" viewBox="0 0 15 13"><path d="M2.6 0.8H13.6Q14.1 0.8 14 1.3L11.9 11.1Q11.8 11.6 11.3 11.6H0.6Q0.1 11.6 0.2 11.1L2.2 1.3Q2.3 0.8 2.6 0.8Z" fill="url(#psg)"/><path d="M5.2 2.5L8.1 5.8L3.6 9.3" stroke="#fff" stroke-width="1.4" fill="none" stroke-linecap="round"/><path d="M6.4 9.4H9.3" stroke="#e8f0f8" stroke-width="1.1" stroke-linecap="round"/></svg>
<div class="t" style="left:814px;top:40px;font-size:12.6px;color:#ffffff;">Find-ServerTypes.ps1</div>
<svg class="ic" style="left:945px;top:42px" width="9" height="9" viewBox="0 0 9 9"><path d="M1 1L8 8M8 1L1 8" stroke="#f0f0f0" stroke-width="1.8"/></svg>
<div class="a" style="left:965px;top:29px;width:220px;height:35px;background:#34352f"></div>
<svg class="ic" style="left:975px;top:40px" width="15" height="13" viewBox="0 0 15 13"><path d="M2.6 0.8H13.6Q14.1 0.8 14 1.3L11.9 11.1Q11.8 11.6 11.3 11.6H0.6Q0.1 11.6 0.2 11.1L2.2 1.3Q2.3 0.8 2.6 0.8Z" fill="url(#psg)"/><path d="M5.2 2.5L8.1 5.8L3.6 9.3" stroke="#fff" stroke-width="1.4" fill="none" stroke-linecap="round"/><path d="M6.4 9.4H9.3" stroke="#e8f0f8" stroke-width="1.1" stroke-linecap="round"/></svg>
<div class="t" style="left:997px;top:40px;font-size:12.6px;color:#c8c8c4;font-style:italic;">Manage-PSSharedGoods.ps1</div>
<div class="a" style="left:1186px;top:29px;width:214px;height:35px;background:#34352f"></div>
<svg class="ic" style="left:1196px;top:40px" width="15" height="13" viewBox="0 0 15 13"><path d="M2.6 0.8H13.6Q14.1 0.8 14 1.3L11.9 11.1Q11.8 11.6 11.3 11.6H0.6Q0.1 11.6 0.2 11.1L2.2 1.3Q2.3 0.8 2.6 0.8Z" fill="url(#psg)"/><path d="M5.2 2.5L8.1 5.8L3.6 9.3" stroke="#fff" stroke-width="1.4" fill="none" stroke-linecap="round"/><path d="M6.4 9.4H9.3" stroke="#e8f0f8" stroke-width="1.1" stroke-linecap="round"/></svg>
<div class="t" style="left:1218px;top:40px;font-size:12.6px;color:#c8c8c4;">Find-ADConnectServer.ps1</div>
<svg class="ic" style="left:3569px;top:39px" width="16" height="16" viewBox="0 0 16 16"><path d="M5 1.5H10.5L13.5 4.5V8.5M1 8V14.5H8" fill="none" stroke="#d8d8d8" stroke-width="1.3"/><circle cx="7" cy="7.5" r="3.2" fill="none" stroke="#6cb4f5" stroke-width="1.5"/><path d="M9.3 9.8L12 12.5" stroke="#6cb4f5" stroke-width="1.6"/></svg>
<svg class="ic" style="left:3601px;top:40px" width="15" height="13" viewBox="0 0 15 13"><path d="M0.8 1.5H14.2V12.2H0.8Z M7.5 1.5V12.2" fill="none" stroke="#e0e0e0" stroke-width="1.4"/><path d="M0.8 1.5H14.2" stroke="#e0e0e0" stroke-width="2"/></svg>
<div class="a" style="left:3635px;top:45px;width:3px;height:3px;border-radius:50%;background:#e0e0e0"></div>
<div class="a" style="left:3640px;top:45px;width:3px;height:3px;border-radius:50%;background:#e0e0e0"></div>
<div class="a" style="left:3645px;top:45px;width:3px;height:3px;border-radius:50%;background:#e0e0e0"></div>
<div class="t" style="left:403px;top:68px;font-size:12.6px;color:#bdbdb8">Public</div>
<svg class="ic" style="left:444px;top:71px" width="5" height="8" viewBox="0 0 5 8"><path d="M0.5 0.5L4.5 4L0.5 7.5Z" fill="none" stroke="#a8a8a3" stroke-width="1"/></svg>
<div class="t" style="left:454px;top:68px;font-size:12.6px;color:#bdbdb8">ActiveDirectory</div>
<svg class="ic" style="left:547px;top:71px" width="5" height="8" viewBox="0 0 5 8"><path d="M0.5 0.5L4.5 4L0.5 7.5Z" fill="none" stroke="#a8a8a3" stroke-width="1"/></svg>
<svg class="ic" style="left:558px;top:70px" width="15" height="13" viewBox="0 0 15 13"><path d="M2.6 0.8H13.6Q14.1 0.8 14 1.3L11.9 11.1Q11.8 11.6 11.3 11.6H0.6Q0.1 11.6 0.2 11.1L2.2 1.3Q2.3 0.8 2.6 0.8Z" fill="url(#psg)"/><path d="M5.2 2.5L8.1 5.8L3.6 9.3" stroke="#fff" stroke-width="1.4" fill="none" stroke-linecap="round"/><path d="M6.4 9.4H9.3" stroke="#e8f0f8" stroke-width="1.1" stroke-linecap="round"/></svg>
<div class="t" style="left:579px;top:68px;font-size:12.6px;color:#bdbdb8">Find-ServerTypes.ps1</div>
<svg class="ic" style="left:706px;top:71px" width="5" height="8" viewBox="0 0 5 8"><path d="M0.5 0.5L4.5 4L0.5 7.5Z" fill="none" stroke="#a8a8a3" stroke-width="1"/></svg>
<div class="t" style="left:716px;top:68px;font-size:12.6px;color:#bdbdb8">PowerShell</div>
<svg class="ic" style="left:784px;top:71px" width="5" height="8" viewBox="0 0 5 8"><path d="M0.5 0.5L4.5 4L0.5 7.5Z" fill="none" stroke="#a8a8a3" stroke-width="1"/></svg>
<svg class="ic" style="left:795px;top:68px" width="13" height="14" viewBox="0 0 13 14"><path d="M6.5 1L12 4V10L6.5 13L1 10V4Z M1 4L6.5 7L12 4 M6.5 7V13" fill="none" stroke="#b180d7" stroke-width="1.2"/></svg>
<div class="t" style="left:810px;top:68px;font-size:12.6px;color:#bdbdb8">Find-ServerTypes { }</div>
<div class="a" style="left:449px;top:1046px;width:3195px;height:16px;background:#3e3d32"></div>
<div class="t" style="left:450px;top:103px;font-size:10.6px;color:#999990;line-height:16px">1 reference | 1 reference</div>
<div class="a" style="left:449px;top:134px;width:1px;height:1312px;background:#464741"></div>
<div class="a" style="left:475px;top:166px;width:1px;height:16px;background:#464741"></div>
<div class="a" style="left:475px;top:246px;width:1px;height:1184px;background:#464741"></div>
<div class="a" style="left:502px;top:262px;width:1px;height:16px;background:#464741"></div>
<div class="a" style="left:502px;top:294px;width:1px;height:32px;background:#464741"></div>
<div class="a" style="left:502px;top:374px;width:1px;height:96px;background:#464741"></div>
<div class="a" style="left:502px;top:486px;width:1px;height:32px;background:#464741"></div>
<div class="a" style="left:502px;top:598px;width:1px;height:368px;background:#464741"></div>
<div class="a" style="left:502px;top:998px;width:1px;height:16px;background:#464741"></div>
<div class="a" style="left:502px;top:1030px;width:1px;height:384px;background:#464741"></div>
<div class="a" style="left:528px;top:406px;width:1px;height:48px;background:#464741"></div>
<div class="a" style="left:528px;top:614px;width:1px;height:16px;background:#464741"></div>
<div class="a" style="left:528px;top:662px;width:1px;height:288px;background:#464741"></div>
<div class="a" style="left:528px;top:1046px;width:1px;height:16px;background:#464741"></div>
<div class="a" style="left:528px;top:1094px;width:1px;height:16px;background:#464741"></div>
<div class="a" style="left:528px;top:1142px;width:1px;height:16px;background:#464741"></div>
<div class="a" style="left:528px;top:1190px;width:1px;height:16px;background:#464741"></div>
<div class="a" style="left:528px;top:1238px;width:1px;height:16px;background:#464741"></div>
<div class="a" style="left:528px;top:1286px;width:1px;height:16px;background:#464741"></div>
<div class="a" style="left:528px;top:1334px;width:1px;height:16px;background:#464741"></div>
<div class="a" style="left:528px;top:1382px;width:1px;height:16px;background:#464741"></div>
<div class="a" style="left:528px;top:1046px;width:1px;height:16px;background:#6f706a"></div>
<div class="a mono" style="left:448.7px;top:2px;font-size:12px;letter-spacing:-0.6px;-webkit-text-stroke:0.25px">
<div class="cl" style="top:118px"><span style="color:#66d9ef;font-style:italic">function</span><i class="w">·</i><span style="color:#a6e22e">Find-ServerTypes</span><i class="w">·</i><span style="color:#f8f8f2">{</span></div>
<div class="cl" style="top:134px"><i class="w">····</i><span style="color:#f8f8f2">[</span><span style="color:#66d9ef">cmdletbinding</span><span style="color:#f8f8f2">(</span><span style="color:#f8f8f2">)</span><span style="color:#f8f8f2">]</span></div>
<div class="cl" style="top:150px"><i class="w">····</i><span style="color:#f92672">param</span><span style="color:#f8f8f2">(</span></div>
<div class="cl" style="top:166px"><i class="w">········</i><span style="color:#f8f8f2">[</span><span style="color:#66d9ef;font-style:italic">string</span><span style="color:#f8f8f2">[</span><span style="color:#f8f8f2">]</span><span style="color:#f8f8f2">]</span><span style="color:#f8f8f2">[</span><span style="color:#66d9ef">ValidateSet</span><span style="color:#f8f8f2">(</span><span style="color:#e6db74">'All'</span><span style="color:#f92672">,</span><i class="w">·</i><span style="color:#e6db74">'ADConnect'</span><span style="color:#f92672">,</span><i class="w">·</i><span style="color:#e6db74">'DomainController'</span><span style="color:#f92672">,</span><i class="w">·</i><span style="color:#e6db74">'Exchange'</span><span style="color:#f92672">,</span><i class="w">·</i><span style="color:#e6db74">'Hyper-V'</span><span style="color:#f92672">,</span><i class="w">·</i><span style="color:#e6db74">'RDSLicense'</span><span style="color:#f92672">,</span><i class="w">·</i><span style="color:#e6db74">'SQL'</span><span style="color:#f92672">,</span><i class="w">·</i><span style="color:#e6db74">'VirtualMachine'</span><span style="color:#f8f8f2">)</span><span style="color:#f8f8f2">]</span><i class="w">·</i><span style="color:#f8f8f2">$Type</span><i class="w">·</i><span style="color:#f92672">=</span><i class="w">·</i><span style="color:#e6db74">'All'</span></div>
<div class="cl" style="top:182px"><i class="w">····</i><span style="color:#f8f8f2">)</span></div>
<div class="cl" style="top:198px"><i class="w">····</i><span style="color:#f8f8f2">$Forest</span><i class="w">·</i><span style="color:#f92672">=</span><i class="w">·</i><span style="color:#66d9ef">Get-ADForest</span></div>
<div class="cl" style="top:230px"><i class="w">····</i><span style="color:#f92672">foreach</span><i class="w">·</i><span style="color:#f8f8f2">(</span><span style="color:#f8f8f2">$Domain</span><i class="w">·</i><span style="color:#f92672">in</span><i class="w">·</i><span style="color:#f8f8f2">$Forest</span><span style="color:#f8f8f2">.</span><span style="color:#f8f8f2">Domains</span><span style="color:#f8f8f2">)</span><i class="w">·</i><span style="color:#f8f8f2">{</span></div>
<div class="cl" style="top:246px"><i class="w">········</i><span style="color:#f92672">try</span><i class="w">·</i><span style="color:#f8f8f2">{</span></div>
<div class="cl" style="top:262px"><i class="w">············</i><span style="color:#f8f8f2">$DomainInformation</span><i class="w">·</i><span style="color:#f92672">=</span><i class="w">·</i><span style="color:#66d9ef">Get-ADDomain</span><i class="w">·</i><span style="color:#f92672">-</span><span style="color:#f8f8f2">Server</span><i class="w">·</i><span style="color:#f8f8f2">$Domain</span><i class="w">·</i><span style="color:#f92672">-</span><span style="color:#f8f8f2">ErrorAction</span><i class="w">·</i><span style="color:#f8f8f2">Stop</span></div>
<div class="cl" style="top:278px"><i class="w">········</i><span style="color:#f8f8f2">}</span><i class="w">·</i><span style="color:#f92672">catch</span><i class="w">·</i><span style="color:#f8f8f2">{</span></div>
<div class="cl" style="top:294px"><i class="w">············</i><span style="color:#66d9ef">Write-Warning</span><i class="w">·</i><span style="color:#e6db74">"Find-ServerTypes<i class="w">·</i>-<i class="w">·</i>Domain<i class="w">·</i>$Domain<i class="w">·</i>couldn't<i class="w">·</i>be<i class="w">·</i>reached.<i class="w">·</i>Skipping"</span></div>
<div class="cl" style="top:310px"><i class="w">············</i><span style="color:#f92672">continue</span></div>
<div class="cl" style="top:326px"><i class="w">········</i><span style="color:#f8f8f2">}</span></div>
<div class="cl" style="top:358px"><i class="w">········</i><span style="color:#f92672">try</span><i class="w">·</i><span style="color:#f8f8f2">{</span></div>
<div class="cl" style="top:374px"><i class="w">············</i><span style="color:#f8f8f2">$ServiceConnectionPoint</span><i class="w">·</i><span style="color:#f92672">=</span><i class="w">·</i><span style="color:#66d9ef">Get-ADObject</span><i class="w">·</i><span style="color:#f92672">-</span><span style="color:#f8f8f2">Filter</span><i class="w">·</i><span style="color:#e6db74">'ObjectClass<i class="w">·</i>-eq<i class="w">·</i>"serviceConnectionPoint"'</span><i class="w">·</i><span style="color:#f92672">-</span><span style="color:#f8f8f2">ErrorAction</span><i class="w">·</i><span style="color:#f8f8f2">Stop</span><i class="w">·</i><span style="color:#f92672">-</span><span style="color:#f8f8f2">Server</span><i class="w">·</i><span style="color:#f8f8f2">$Domain</span></div>
<div class="cl" style="top:390px"><i class="w">············</i><span style="color:#f92672">foreach</span><i class="w">·</i><span style="color:#f8f8f2">(</span><span style="color:#f8f8f2">$Point</span><i class="w">·</i><span style="color:#f92672">in</span><i class="w">·</i><span style="color:#f8f8f2">$ServiceConnectionPoint</span><span style="color:#f8f8f2">)</span><i class="w">·</i><span style="color:#f8f8f2">{</span></div>
<div class="cl" style="top:406px"><i class="w">················</i><span style="color:#f8f8f2">$Temporary</span><i class="w">·</i><span style="color:#f92672">=</span><i class="w">·</i><span style="color:#f8f8f2">$Point</span><span style="color:#f8f8f2">.</span><span style="color:#f8f8f2">DistinguishedName</span><span style="color:#f8f8f2">.</span><span style="color:#f8f8f2">split</span><span style="color:#f8f8f2">(</span><span style="color:#e6db74">","</span><span style="color:#f8f8f2">)</span><i class="w">············</i></div>
<div class="cl" style="top:422px"><i class="w">················</i><span style="color:#f8f8f2">$DistinguishedName</span><i class="w">·</i><span style="color:#f92672">=</span><i class="w">·</i><span style="color:#f8f8f2">$Temporary</span><span style="color:#f8f8f2">[</span><span style="color:#ae81ff">1</span><span style="color:#f92672">..</span><span style="color:#f8f8f2">$Temporary</span><span style="color:#f8f8f2">.</span><span style="color:#f8f8f2">Count</span><span style="color:#f8f8f2">]</span><i class="w">·</i><span style="color:#f92672">-join</span><i class="w">·</i><span style="color:#e6db74">","</span><i class="w">····</i></div>
<div class="cl" style="top:438px"><i class="w">················</i><span style="color:#f8f8f2">$Point</span><i class="w">·</i><span style="color:#f92672">|</span><i class="w">·</i><span style="color:#66d9ef">Add-Member</span><i class="w">·</i><span style="color:#f92672">-</span><span style="color:#f8f8f2">MemberType</span><i class="w">·</i><span style="color:#e6db74">'NoteProperty'</span><i class="w">·</i><span style="color:#f92672">-</span><span style="color:#f8f8f2">Name</span><i class="w">·</i><span style="color:#e6db74">'DN'</span><i class="w">·</i><span style="color:#f92672">-</span><span style="color:#f8f8f2">Value</span><i class="w">·</i><span style="color:#f8f8f2">$DistinguishedName</span><i class="w">·</i><span style="color:#f92672">-</span><span style="color:#f8f8f2">Force</span></div>
<div class="cl" style="top:454px"><i class="w">············</i><span style="color:#f8f8f2">}</span></div>
<div class="cl" style="top:470px"><i class="w">········</i><span style="color:#f8f8f2">}</span><i class="w">·</i><span style="color:#f92672">catch</span><i class="w">·</i><span style="color:#f8f8f2">{</span></div>
<div class="cl" style="top:486px"><i class="w">············</i><span style="color:#66d9ef">Write-Error</span><i class="w">·</i><span style="color:#e6db74">"Find-ServerTypes<i class="w">·</i>-<i class="w">·</i>Get-ADObject<i class="w">·</i>command<i class="w">·</i>failed.<i class="w">·</i>Terminating.<i class="w">·</i>Error<i class="w">·</i>$_"</span></div>
<div class="cl" style="top:502px"><i class="w">············</i><span style="color:#f92672">return</span></div>
<div class="cl" style="top:518px"><i class="w">········</i><span style="color:#f8f8f2">}</span></div>
<div class="cl" style="top:550px"><i class="w">········</i><span style="color:#f8f8f2">$ADConnect</span><i class="w">·</i><span style="color:#f92672">=</span><i class="w">·</i><span style="color:#66d9ef">Find-ADConnectServer</span></div>
<div class="cl" style="top:566px"><i class="w">········</i><span style="color:#f8f8f2">$Computers</span><i class="w">·</i><span style="color:#f92672">=</span><i class="w">·</i><span style="color:#66d9ef">Get-ADComputer</span><i class="w">·</i><span style="color:#f92672">-</span><span style="color:#f8f8f2">Filter</span><i class="w">·</i><span style="color:#f92672">*</span><i class="w">·</i><span style="color:#f92672">-</span><span style="color:#f8f8f2">Properties</span><i class="w">·</i><span style="color:#f8f8f2">Name</span><span style="color:#f92672">,</span><i class="w">·</i><span style="color:#f8f8f2">DNSHostName</span><span style="color:#f92672">,</span><i class="w">·</i><span style="color:#f8f8f2">OperatingSystem</span><span style="color:#f92672">,</span><i class="w">·</i><span style="color:#f8f8f2">DistinguishedName</span><span style="color:#f92672">,</span><i class="w">·</i><span style="color:#f8f8f2">ServicePrincipalName</span><i class="w">·</i><span style="color:#f92672">-</span><span style="color:#f8f8f2">Server</span><i class="w">·</i><span style="color:#f8f8f2">$Domain</span></div>
<div class="cl" style="top:582px"><i class="w">········</i><span style="color:#f8f8f2">$Servers</span><i class="w">·</i><span style="color:#f92672">=</span><i class="w">·</i><span style="color:#f92672">foreach</span><i class="w">·</i><span style="color:#f8f8f2">(</span><span style="color:#f8f8f2">$Computer</span><i class="w">·</i><span style="color:#f92672">in</span><i class="w">·</i><span style="color:#f8f8f2">$Computers</span><span style="color:#f8f8f2">)</span><i class="w">·</i><span style="color:#f8f8f2">{</span></div>
<div class="cl" style="top:598px"><i class="w">············</i><span style="color:#f8f8f2">$Services</span><i class="w">·</i><span style="color:#f92672">=</span><i class="w">·</i><span style="color:#f92672">foreach</span><i class="w">·</i><span style="color:#f8f8f2">(</span><span style="color:#f8f8f2">$Service</span><i class="w">·</i><span style="color:#f92672">in</span><i class="w">·</i><span style="color:#f8f8f2">$Computer</span><span style="color:#f8f8f2">.</span><span style="color:#f8f8f2">servicePrincipalName</span><span style="color:#f8f8f2">)</span><i class="w">·</i><span style="color:#f8f8f2">{</span></div>
<div class="cl" style="top:614px"><i class="w">················</i><span style="color:#f8f8f2">(</span><span style="color:#f8f8f2">$Service</span><i class="w">·</i><span style="color:#f92672">-split</span><i class="w">·</i><span style="color:#e6db74">'/'</span><span style="color:#f8f8f2">)</span><span style="color:#f8f8f2">[</span><span style="color:#ae81ff">0</span><span style="color:#f8f8f2">]</span></div>
<div class="cl" style="top:630px"><i class="w">············</i><span style="color:#f8f8f2">}</span></div>
<div class="cl" style="top:646px"><i class="w">············</i><span style="color:#f8f8f2">[</span><span style="color:#66d9ef;font-style:italic">PSCustomObject</span><span style="color:#f8f8f2">]</span><i class="w">·</i><span style="color:#f92672">@</span><span style="color:#f8f8f2">{</span></div>
<div class="cl" style="top:662px"><i class="w">················</i><span style="color:#f8f8f2">Name</span><i class="w">···················</i><span style="color:#f92672">=</span><i class="w">·</i><span style="color:#f8f8f2">$Computer</span><span style="color:#f8f8f2">.</span><span style="color:#f8f8f2">Name</span></div>
<div class="cl" style="top:678px"><i class="w">················</i><span style="color:#f8f8f2">FQDN</span><i class="w">···················</i><span style="color:#f92672">=</span><i class="w">·</i><span style="color:#f8f8f2">$Computer</span><span style="color:#f8f8f2">.</span><span style="color:#f8f8f2">DNSHostName</span></div>
<div class="cl" style="top:694px"><i class="w">················</i><span style="color:#f8f8f2">OperatingSystem</span><i class="w">········</i><span style="color:#f92672">=</span><i class="w">·</i><span style="color:#f8f8f2">$Computer</span><span style="color:#f8f8f2">.</span><span style="color:#f8f8f2">OperatingSystem</span></div>
<div class="cl" style="top:710px"><i class="w">················</i><span style="color:#f8f8f2">DistinguishedName</span><i class="w">······</i><span style="color:#f92672">=</span><i class="w">·</i><span style="color:#f8f8f2">$Computer</span><span style="color:#f8f8f2">.</span><span style="color:#f8f8f2">DistinguishedName</span></div>
<div class="cl" style="top:726px"><i class="w">················</i><span style="color:#f8f8f2">Enabled</span><i class="w">················</i><span style="color:#f92672">=</span><i class="w">·</i><span style="color:#f8f8f2">$Computer</span><span style="color:#f8f8f2">.</span><span style="color:#f8f8f2">Enabled</span></div>
<div class="cl" style="top:742px"><i class="w">················</i><span style="color:#f8f8f2">IsExchange</span><i class="w">·············</i><span style="color:#f92672">=</span><i class="w">·</i><span style="color:#f92672">if</span><i class="w">·</i><span style="color:#f8f8f2">(</span><span style="color:#f8f8f2">$Services</span><i class="w">·</i><span style="color:#f92672">-like</span><i class="w">·</i><span style="color:#e6db74">'*ExchangeMDB*'</span><i class="w">·</i><span style="color:#f92672">-or</span><i class="w">·</i><span style="color:#f8f8f2">$Services</span><i class="w">·</i><span style="color:#f92672">-like</span><i class="w">·</i><span style="color:#e6db74">'*ExchangeRFR*'</span><span style="color:#f8f8f2">)</span><i class="w">·</i><span style="color:#f8f8f2">{</span><i class="w">·</i><span style="color:#ae81ff">$true</span><i class="w">·</i><span style="color:#f8f8f2">}</span><i class="w">·</i><span style="color:#f92672">else</span><i class="w">·</i><span style="color:#f8f8f2">{</span><i class="w">·</i><span style="color:#ae81ff">$false</span><i class="w">·</i><span style="color:#f8f8f2">}</span></div>
<div class="cl" style="top:758px"><i class="w">················</i><span style="color:#f8f8f2">IsSql</span><i class="w">··················</i><span style="color:#f92672">=</span><i class="w">·</i><span style="color:#f92672">if</span><i class="w">·</i><span style="color:#f8f8f2">(</span><span style="color:#f8f8f2">$Services</span><i class="w">·</i><span style="color:#f92672">-like</span><i class="w">·</i><span style="color:#e6db74">'*MSSql*'</span><span style="color:#f8f8f2">)</span><i class="w">·</i><span style="color:#f8f8f2">{</span><i class="w">·</i><span style="color:#ae81ff">$true</span><i class="w">·</i><span style="color:#f8f8f2">}</span><i class="w">·</i><span style="color:#f92672">else</span><i class="w">·</i><span style="color:#f8f8f2">{</span><i class="w">·</i><span style="color:#ae81ff">$false</span><i class="w">·</i><span style="color:#f8f8f2">}</span></div>
<div class="cl" style="top:774px"><i class="w">················</i><span style="color:#f8f8f2">IsVM</span><i class="w">···················</i><span style="color:#f92672">=</span><i class="w">·</i><span style="color:#f92672">if</span><i class="w">·</i><span style="color:#f8f8f2">(</span><span style="color:#f8f8f2">$ServiceConnectionPoint</span><span style="color:#f8f8f2">.</span><span style="color:#f8f8f2">DN</span><i class="w">·</i><span style="color:#f92672">-eq</span><i class="w">·</i><span style="color:#f8f8f2">$Computer</span><span style="color:#f8f8f2">.</span><span style="color:#f8f8f2">DistinguishedName</span><i class="w">·</i><span style="color:#f92672">-and</span><i class="w">·</i><span style="color:#f8f8f2">$ServiceConnectionPoint</span><span style="color:#f8f8f2">.</span><span style="color:#f8f8f2">Name</span><i class="w">·</i><span style="color:#f92672">-eq</span><i class="w">·</i><span style="color:#e6db74">'Windows<i class="w">·</i>Virtual<i class="w">·</i>Machine'</span><span style="color:#f8f8f2">)</span><i class="w">·</i><span style="color:#f8f8f2">{</span><i class="w">·</i><span style="color:#ae81ff">$true</span><i class="w">·</i><span style="color:#f8f8f2">}</span><i class="w">·</i><span style="color:#f92672">else</span><i class="w">·</i><span style="color:#f8f8f2">{</span><i class="w">·</i><span style="color:#ae81ff">$false</span><i class="w">·</i><span style="color:#f8f8f2">}</span><i class="w">·</i></div>
<div class="cl" style="top:790px"><i class="w">················</i><span style="color:#f8f8f2">IsHyperV</span><i class="w">···············</i><span style="color:#f92672">=</span><i class="w">·</i><span style="color:#f92672">if</span><i class="w">·</i><span style="color:#f8f8f2">(</span><span style="color:#f8f8f2">$Services</span><i class="w">·</i><span style="color:#f92672">-like</span><i class="w">·</i><span style="color:#e6db74">'*Hyper-V<i class="w">·</i>Replica*'</span><span style="color:#f8f8f2">)</span><i class="w">·</i><span style="color:#f8f8f2">{</span><i class="w">·</i><span style="color:#ae81ff">$true</span><i class="w">·</i><span style="color:#f8f8f2">}</span><i class="w">·</i><span style="color:#f92672">else</span><i class="w">·</i><span style="color:#f8f8f2">{</span><i class="w">·</i><span style="color:#ae81ff">$false</span><i class="w">·</i><span style="color:#f8f8f2">}</span></div>
<div class="cl" style="top:806px"><i class="w">················</i><span style="color:#f8f8f2">IsSPHyperV</span><i class="w">·············</i><span style="color:#f92672">=</span><i class="w">·</i><span style="color:#f92672">if</span><i class="w">·</i><span style="color:#f8f8f2">(</span><span style="color:#f8f8f2">$ServiceConnectionPoint</span><span style="color:#f8f8f2">.</span><span style="color:#f8f8f2">DN</span><i class="w">·</i><span style="color:#f92672">-eq</span><i class="w">·</i><span style="color:#f8f8f2">$Computer</span><span style="color:#f8f8f2">.</span><span style="color:#f8f8f2">DistinguishedName</span><i class="w">·</i><span style="color:#f92672">-and</span><i class="w">·</i><span style="color:#f8f8f2">$ServiceConnectionPoint</span><span style="color:#f8f8f2">.</span><span style="color:#f8f8f2">Name</span><i class="w">·</i><span style="color:#f92672">-eq</span><i class="w">·</i><span style="color:#e6db74">'Microsoft<i class="w">·</i>Hyper-V'</span><span style="color:#f8f8f2">)</span><i class="w">·</i><span style="color:#f8f8f2">{</span><i class="w">·</i><span style="color:#ae81ff">$true</span><i class="w">·</i><span style="color:#f8f8f2">}</span><i class="w">·</i><span style="color:#f92672">else</span><i class="w">·</i><span style="color:#f8f8f2">{</span><i class="w">·</i><span style="color:#ae81ff">$false</span><i class="w">·</i><span style="color:#f8f8f2">}</span><i class="w">·</i></div>
<div class="cl" style="top:822px"><i class="w">················</i><span style="color:#f8f8f2">IsRDSLicense</span><i class="w">···········</i><span style="color:#f92672">=</span><i class="w">·</i><span style="color:#f92672">if</span><i class="w">·</i><span style="color:#f8f8f2">(</span><span style="color:#f8f8f2">$ServiceConnectionPoint</span><span style="color:#f8f8f2">.</span><span style="color:#f8f8f2">DN</span><i class="w">·</i><span style="color:#f92672">-eq</span><i class="w">·</i><span style="color:#f8f8f2">$Computer</span><span style="color:#f8f8f2">.</span><span style="color:#f8f8f2">DistinguishedName</span><i class="w">·</i><span style="color:#f92672">-and</span><i class="w">·</i><span style="color:#f8f8f2">$ServiceConnectionPoint</span><span style="color:#f8f8f2">.</span><span style="color:#f8f8f2">Name</span><i class="w">·</i><span style="color:#f92672">-eq</span><i class="w">·</i><span style="color:#e6db74">'TermServLicensing'</span><span style="color:#f8f8f2">)</span><i class="w">·</i><span style="color:#f8f8f2">{</span><i class="w">·</i><span style="color:#ae81ff">$true</span><i class="w">·</i><span style="color:#f8f8f2">}</span><i class="w">·</i><span style="color:#f92672">else</span><i class="w">·</i><span style="color:#f8f8f2">{</span><i class="w">·</i><span style="color:#ae81ff">$false</span><i class="w">·</i><span style="color:#f8f8f2">}</span><i class="w">·</i></div>
<div class="cl" style="top:838px"><i class="w">················</i><span style="color:#75715e">#IsDC<i class="w">·</i><i class="w">·</i><i class="w">·</i><i class="w">·</i><i class="w">·</i><i class="w">·</i><i class="w">·</i><i class="w">·</i><i class="w">·</i><i class="w">·</i><i class="w">·</i><i class="w">·</i><i class="w">·</i><i class="w">·</i><i class="w">·</i><i class="w">·</i><i class="w">·</i><i class="w">·</i><i class="w">·</i>=<i class="w">·</i>if<i class="w">·</i>($Services<i class="w">·</i>-like<i class="w">·</i>'*ldap*'<i class="w">·</i>-and<i class="w">·</i>$Services<i class="w">·</i>-like<i class="w">·</i>'*DNS*')<i class="w">·</i>{<i class="w">·</i>$true<i class="w">·</i>}<i class="w">·</i>else<i class="w">·</i>{<i class="w">·</i>$false<i class="w">·</i>}</span></div>
<div class="cl" style="top:854px"><i class="w">················</i><span style="color:#f8f8f2">IsDC</span><i class="w">···················</i><span style="color:#f92672">=</span><i class="w">·</i><span style="color:#f92672">if</span><i class="w">·</i><span style="color:#f8f8f2">(</span><span style="color:#f8f8f2">$DomainInformation</span><span style="color:#f8f8f2">.</span><span style="color:#f8f8f2">ReplicaDirectoryServers</span><i class="w">·</i><span style="color:#f92672">-contains</span><i class="w">·</i><span style="color:#f8f8f2">$Computer</span><span style="color:#f8f8f2">.</span><span style="color:#f8f8f2">DNSHostName</span><span style="color:#f8f8f2">)</span><i class="w">·</i><span style="color:#f8f8f2">{</span><i class="w">·</i><span style="color:#ae81ff">$true</span><i class="w">·</i><span style="color:#f8f8f2">}</span><i class="w">·</i><span style="color:#f92672">else</span><i class="w">·</i><span style="color:#f8f8f2">{</span><i class="w">·</i><span style="color:#ae81ff">$false</span><i class="w">·</i><span style="color:#f8f8f2">}</span><i class="w">··</i></div>
<div class="cl" style="top:870px"><i class="w">················</i><span style="color:#f8f8f2">IsADConnect</span><i class="w">············</i><span style="color:#f92672">=</span><i class="w">·</i><span style="color:#f92672">if</span><i class="w">·</i><span style="color:#f8f8f2">(</span><span style="color:#f8f8f2">$ADConnect</span><span style="color:#f8f8f2">.</span><span style="color:#f8f8f2">FQDN</span><i class="w">·</i><span style="color:#f92672">-eq</span><i class="w">·</i><span style="color:#f8f8f2">$Computer</span><span style="color:#f8f8f2">.</span><span style="color:#f8f8f2">DNSHostName</span><span style="color:#f8f8f2">)</span><i class="w">·</i><span style="color:#f8f8f2">{</span><i class="w">·</i><span style="color:#ae81ff">$true</span><i class="w">·</i><span style="color:#f8f8f2">}</span><i class="w">·</i><span style="color:#f92672">else</span><i class="w">·</i><span style="color:#f8f8f2">{</span><i class="w">·</i><span style="color:#ae81ff">$false</span><i class="w">·</i><span style="color:#f8f8f2">}</span></div>
<div class="cl" style="top:886px"><i class="w">················</i><span style="color:#f8f8f2">Forest</span><i class="w">·················</i><span style="color:#f92672">=</span><i class="w">·</i><span style="color:#f8f8f2">$Forest</span><span style="color:#f8f8f2">.</span><span style="color:#f8f8f2">Name</span></div>
<div class="cl" style="top:902px"><i class="w">················</i><span style="color:#f8f8f2">Domain</span><i class="w">·················</i><span style="color:#f92672">=</span><i class="w">·</i><span style="color:#f8f8f2">$Domain</span></div>
<div class="cl" style="top:918px"><i class="w">················</i><span style="color:#f8f8f2">ServicePrincipalName</span><i class="w">···</i><span style="color:#f92672">=</span><i class="w">·</i><span style="color:#f8f8f2">(</span><span style="color:#f8f8f2">$Services</span><i class="w">·</i><span style="color:#f92672">|</span><i class="w">·</i><span style="color:#66d9ef">Sort-Object</span><i class="w">·</i><span style="color:#f92672">-</span><span style="color:#f8f8f2">Unique</span><span style="color:#f8f8f2">)</span><i class="w">·</i><span style="color:#f92672">-Join</span><i class="w">·</i><span style="color:#e6db74">','</span></div>
<div class="cl" style="top:934px"><i class="w">················</i><span style="color:#f8f8f2">ServiceConnectionPoint</span><i class="w">·</i><span style="color:#f92672">=</span><i class="w">·</i><span style="color:#f8f8f2">(</span><span style="color:#f8f8f2">$ServiceConnectionPoint</span><i class="w">·</i><span style="color:#f92672">|</span><i class="w">·</i><span style="color:#66d9ef">Where-Object</span><i class="w">·</i><span style="color:#f8f8f2">{</span><i class="w">·</i><span style="color:#66d9ef">$_</span><span style="color:#f8f8f2">.</span><span style="color:#f8f8f2">DN</span><i class="w">·</i><span style="color:#f92672">-eq</span><i class="w">·</i><span style="color:#f8f8f2">$Computer</span><span style="color:#f8f8f2">.</span><span style="color:#f8f8f2">DistinguishedName</span><i class="w">·</i><span style="color:#f8f8f2">}</span><span style="color:#f8f8f2">)</span><span style="color:#f8f8f2">.</span><span style="color:#f8f8f2">Name</span><i class="w">·</i><span style="color:#f92672">-join</span><i class="w">·</i><span style="color:#e6db74">','</span></div>
<div class="cl" style="top:950px"><i class="w">············</i><span style="color:#f8f8f2">}</span></div>
<div class="cl" style="top:966px"><i class="w">········</i><span style="color:#f8f8f2">}</span></div>
<div class="cl" style="top:982px"><i class="w">········</i><span style="color:#f92672">if</span><i class="w">·</i><span style="color:#f8f8f2">(</span><span style="color:#f8f8f2">$Type</span><i class="w">·</i><span style="color:#f92672">-eq</span><i class="w">·</i><span style="color:#e6db74">'All'</span><span style="color:#f8f8f2">)</span><i class="w">·</i><span style="color:#f8f8f2">{</span></div>
<div class="cl" style="top:998px"><i class="w">············</i><span style="color:#f8f8f2">$Servers</span></div>
<div class="cl" style="top:1014px"><i class="w">········</i><span style="color:#f8f8f2">}</span><i class="w">·</i><span style="color:#f92672">else</span><i class="w">·</i><span style="color:#f8f8f2">{</span></div>
<div class="cl" style="top:1030px"><i class="w">············</i><span style="color:#f92672">if</span><i class="w">·</i><span style="color:#f8f8f2">(</span><span style="color:#f8f8f2">$Type</span><i class="w">·</i><span style="color:#f92672">-contains</span><i class="w">·</i><span style="color:#e6db74">'SQL'</span><span style="color:#f8f8f2">)</span><i class="w">·</i><span style="color:#f8f8f2">{</span></div>
<div class="cl" style="top:1046px"><i class="w">················</i><span style="color:#f8f8f2">$Servers</span><i class="w">·</i><span style="color:#f92672">|</span><i class="w">·</i><span style="color:#66d9ef">Where-Object</span><i class="w">·</i><span style="color:#f8f8f2">{</span><i class="w">·</i><span style="color:#66d9ef">$_</span><span style="color:#f8f8f2">.</span><span style="color:#f8f8f2">IsSql</span><i class="w">·</i><span style="color:#f92672">-eq</span><i class="w">·</i><span style="color:#ae81ff">$true</span><i class="w">·</i><span style="color:#f8f8f2">}</span></div>
<div class="cl" style="top:1062px"><i class="w">············</i><span style="color:#f8f8f2">}</span></div>
<div class="cl" style="top:1078px"><i class="w">············</i><span style="color:#f92672">if</span><i class="w">·</i><span style="color:#f8f8f2">(</span><span style="color:#f8f8f2">$Type</span><i class="w">·</i><span style="color:#f92672">-contains</span><i class="w">·</i><span style="color:#e6db74">'Exchange'</span><i class="w">·</i><span style="color:#f8f8f2">)</span><i class="w">·</i><span style="color:#f8f8f2">{</span></div>
<div class="cl" style="top:1094px"><i class="w">················</i><span style="color:#f8f8f2">$Servers</span><i class="w">·</i><span style="color:#f92672">|</span><i class="w">·</i><span style="color:#66d9ef">Where-Object</span><i class="w">·</i><span style="color:#f8f8f2">{</span><i class="w">·</i><span style="color:#66d9ef">$_</span><span style="color:#f8f8f2">.</span><span style="color:#f8f8f2">IsExchange</span><i class="w">·</i><span style="color:#f92672">-eq</span><i class="w">·</i><span style="color:#ae81ff">$true</span><i class="w">·</i><span style="color:#f8f8f2">}</span><i class="w">·</i></div>
<div class="cl" style="top:1110px"><i class="w">············</i><span style="color:#f8f8f2">}</span></div>
<div class="cl" style="top:1126px"><i class="w">············</i><span style="color:#f92672">if</span><i class="w">·</i><span style="color:#f8f8f2">(</span><span style="color:#f8f8f2">$Type</span><i class="w">·</i><span style="color:#f92672">-contains</span><i class="w">·</i><span style="color:#e6db74">'Hyper-V'</span><span style="color:#f8f8f2">)</span><i class="w">·</i><span style="color:#f8f8f2">{</span></div>
<div class="cl" style="top:1142px"><i class="w">················</i><span style="color:#f8f8f2">$Servers</span><i class="w">·</i><span style="color:#f92672">|</span><i class="w">·</i><span style="color:#66d9ef">Where-Object</span><i class="w">·</i><span style="color:#f8f8f2">{</span><i class="w">·</i><span style="color:#66d9ef">$_</span><span style="color:#f8f8f2">.</span><span style="color:#f8f8f2">IsHyperV</span><i class="w">·</i><span style="color:#f92672">-eq</span><i class="w">·</i><span style="color:#ae81ff">$true</span><i class="w">·</i><span style="color:#f92672">-or</span><i class="w">·</i><span style="color:#66d9ef">$_</span><span style="color:#f8f8f2">.</span><span style="color:#f8f8f2">IsSPHyperV</span><i class="w">·</i><span style="color:#f92672">-eq</span><i class="w">·</i><span style="color:#ae81ff">$true</span><i class="w">·</i><span style="color:#f8f8f2">}</span><i class="w">·</i></div>
<div class="cl" style="top:1158px"><i class="w">············</i><span style="color:#f8f8f2">}</span></div>
<div class="cl" style="top:1174px"><i class="w">············</i><span style="color:#f92672">if</span><i class="w">·</i><span style="color:#f8f8f2">(</span><span style="color:#f8f8f2">$Type</span><i class="w">·</i><span style="color:#f92672">-contains</span><i class="w">·</i><span style="color:#e6db74">'VirtualMachine'</span><span style="color:#f8f8f2">)</span><i class="w">·</i><span style="color:#f8f8f2">{</span></div>
<div class="cl" style="top:1190px"><i class="w">················</i><span style="color:#f8f8f2">$Servers</span><i class="w">·</i><span style="color:#f92672">|</span><i class="w">·</i><span style="color:#66d9ef">Where-Object</span><i class="w">·</i><span style="color:#f8f8f2">{</span><i class="w">·</i><span style="color:#66d9ef">$_</span><span style="color:#f8f8f2">.</span><span style="color:#f8f8f2">IsVM</span><i class="w">·</i><span style="color:#f92672">-eq</span><i class="w">·</i><span style="color:#ae81ff">$true</span><i class="w">·</i><span style="color:#f8f8f2">}</span><i class="w">·</i></div>
<div class="cl" style="top:1206px"><i class="w">············</i><span style="color:#f8f8f2">}</span></div>
<div class="cl" style="top:1222px"><i class="w">············</i><span style="color:#f92672">if</span><i class="w">·</i><span style="color:#f8f8f2">(</span><span style="color:#f8f8f2">$Type</span><i class="w">·</i><span style="color:#f92672">-contains</span><i class="w">·</i><span style="color:#e6db74">'RDSLicense'</span><span style="color:#f8f8f2">)</span><i class="w">·</i><span style="color:#f8f8f2">{</span></div>
<div class="cl" style="top:1238px"><i class="w">················</i><span style="color:#f8f8f2">$Servers</span><i class="w">·</i><span style="color:#f92672">|</span><i class="w">·</i><span style="color:#66d9ef">Where-Object</span><i class="w">·</i><span style="color:#f8f8f2">{</span><i class="w">·</i><span style="color:#66d9ef">$_</span><span style="color:#f8f8f2">.</span><span style="color:#f8f8f2">IsRDSLicense</span><i class="w">·</i><span style="color:#f92672">-eq</span><i class="w">·</i><span style="color:#ae81ff">$true</span><i class="w">·</i><span style="color:#f8f8f2">}</span><i class="w">·</i></div>
<div class="cl" style="top:1254px"><i class="w">············</i><span style="color:#f8f8f2">}</span></div>
<div class="cl" style="top:1270px"><i class="w">············</i><span style="color:#f92672">if</span><i class="w">·</i><span style="color:#f8f8f2">(</span><span style="color:#f8f8f2">$Type</span><i class="w">·</i><span style="color:#f92672">-contains</span><i class="w">·</i><span style="color:#e6db74">'DomainController'</span><span style="color:#f8f8f2">)</span><i class="w">·</i><span style="color:#f8f8f2">{</span></div>
<div class="cl" style="top:1286px"><i class="w">················</i><span style="color:#f8f8f2">$Servers</span><i class="w">·</i><span style="color:#f92672">|</span><i class="w">·</i><span style="color:#66d9ef">Where-Object</span><i class="w">·</i><span style="color:#f8f8f2">{</span><i class="w">·</i><span style="color:#66d9ef">$_</span><span style="color:#f8f8f2">.</span><span style="color:#f8f8f2">IsDC</span><i class="w">·</i><span style="color:#f92672">-eq</span><i class="w">·</i><span style="color:#ae81ff">$true</span><i class="w">·</i><span style="color:#f8f8f2">}</span><i class="w">·</i></div>
<div class="cl" style="top:1302px"><i class="w">············</i><span style="color:#f8f8f2">}</span></div>
<div class="cl" style="top:1318px"><i class="w">············</i><span style="color:#f92672">if</span><i class="w">·</i><span style="color:#f8f8f2">(</span><span style="color:#f8f8f2">$Type</span><i class="w">·</i><span style="color:#f92672">-contains</span><i class="w">·</i><span style="color:#e6db74">'DomainController'</span><span style="color:#f8f8f2">)</span><i class="w">·</i><span style="color:#f8f8f2">{</span></div>
<div class="cl" style="top:1334px"><i class="w">················</i><span style="color:#f8f8f2">$Servers</span><i class="w">·</i><span style="color:#f92672">|</span><i class="w">·</i><span style="color:#66d9ef">Where-Object</span><i class="w">·</i><span style="color:#f8f8f2">{</span><i class="w">·</i><span style="color:#66d9ef">$_</span><span style="color:#f8f8f2">.</span><span style="color:#f8f8f2">IsDC</span><i class="w">·</i><span style="color:#f92672">-eq</span><i class="w">·</i><span style="color:#ae81ff">$true</span><i class="w">·</i><span style="color:#f8f8f2">}</span><i class="w">·</i></div>
<div class="cl" style="top:1350px"><i class="w">············</i><span style="color:#f8f8f2">}</span></div>
<div class="cl" style="top:1366px"><i class="w">············</i><span style="color:#f92672">if</span><i class="w">·</i><span style="color:#f8f8f2">(</span><span style="color:#f8f8f2">$Type</span><i class="w">·</i><span style="color:#f92672">-contains</span><i class="w">·</i><span style="color:#e6db74">'ADConnect'</span><span style="color:#f8f8f2">)</span><i class="w">·</i><span style="color:#f8f8f2">{</span></div>
<div class="cl" style="top:1382px"><i class="w">················</i><span style="color:#f8f8f2">$Servers</span><i class="w">·</i><span style="color:#f92672">|</span><i class="w">·</i><span style="color:#66d9ef">Where-Object</span><i class="w">·</i><span style="color:#f8f8f2">{</span><i class="w">·</i><span style="color:#66d9ef">$_</span><span style="color:#f8f8f2">.</span><span style="color:#f8f8f2">IsADConnect</span><i class="w">·</i><span style="color:#f92672">-eq</span><i class="w">·</i><span style="color:#ae81ff">$true</span><i class="w">·</i><span style="color:#f8f8f2">}</span><i class="w">·</i></div>
<div class="cl" style="top:1398px"><i class="w">············</i><span style="color:#f8f8f2">}</span></div>
<div class="cl" style="top:1414px"><i class="w">········</i><span style="color:#f8f8f2">}</span></div>
<div class="cl" style="top:1430px"><i class="w">····</i><span style="color:#f8f8f2">}</span></div>
<div class="cl" style="top:1446px"><span style="color:#f8f8f2">}</span></div>
<div class="cl" style="top:1478px"><span style="color:#66d9ef">Find-ServerTypes</span><i class="w">·</i><span style="color:#f92672">|</span><i class="w">·</i><span style="color:#66d9ef">Format-Table</span><i class="w">·</i><span style="color:#f92672">*</span></div>
</div>
<div class="a mono" style="left:-1px;top:2px;font-size:12px;letter-spacing:-0.6px;-webkit-text-stroke:0.15px">
<div class="ln" style="left:384px;top:86px">1</div>
<div class="ln" style="left:384px;top:118px">2</div>
<div class="ln" style="left:384px;top:134px">3</div>
<div class="ln" style="left:384px;top:150px">4</div>
<div class="ln" style="left:384px;top:166px">5</div>
<div class="ln" style="left:384px;top:182px">6</div>
<div class="ln" style="left:384px;top:198px">7</div>
<div class="ln" style="left:384px;top:214px">8</div>
<div class="ln" style="left:384px;top:230px">9</div>
<div class="ln" style="left:384px;top:246px">10</div>
<div class="ln" style="left:384px;top:262px">11</div>
<div class="ln" style="left:384px;top:278px">12</div>
<div class="ln" style="left:384px;top:294px">13</div>
<div class="ln" style="left:384px;top:310px">14</div>
<div class="ln" style="left:384px;top:326px">15</div>
<div class="ln" style="left:384px;top:342px">16</div>
<div class="ln" style="left:384px;top:358px">17</div>
<div class="ln" style="left:384px;top:374px">18</div>
<div class="ln" style="left:384px;top:390px">19</div>
<div class="ln" style="left:384px;top:406px">20</div>
<div class="ln" style="left:384px;top:422px">21</div>
<div class="ln" style="left:384px;top:438px">22</div>
<div class="ln" style="left:384px;top:454px">23</div>
<div class="ln" style="left:384px;top:470px">24</div>
<div class="ln" style="left:384px;top:486px">25</div>
<div class="ln" style="left:384px;top:502px">26</div>
<div class="ln" style="left:384px;top:518px">27</div>
<div class="ln" style="left:384px;top:534px">28</div>
<div class="ln" style="left:384px;top:550px">29</div>
<div class="ln" style="left:384px;top:566px">30</div>
<div class="ln" style="left:384px;top:582px">31</div>
<div class="ln" style="left:384px;top:598px">32</div>
<div class="ln" style="left:384px;top:614px">33</div>
<div class="ln" style="left:384px;top:630px">34</div>
<div class="ln" style="left:384px;top:646px">35</div>
<div class="ln" style="left:384px;top:662px">36</div>
<div class="ln" style="left:384px;top:678px">37</div>
<div class="ln" style="left:384px;top:694px">38</div>
<div class="ln" style="left:384px;top:710px">39</div>
<div class="ln" style="left:384px;top:726px">40</div>
<div class="ln" style="left:384px;top:742px">41</div>
<div class="ln" style="left:384px;top:758px">42</div>
<div class="ln" style="left:384px;top:774px">43</div>
<div class="ln" style="left:384px;top:790px">44</div>
<div class="ln" style="left:384px;top:806px">45</div>
<div class="ln" style="left:384px;top:822px">46</div>
<div class="ln" style="left:384px;top:838px">47</div>
<div class="ln" style="left:384px;top:854px">48</div>
<div class="ln" style="left:384px;top:870px">49</div>
<div class="ln" style="left:384px;top:886px">50</div>
<div class="ln" style="left:384px;top:902px">51</div>
<div class="ln" style="left:384px;top:918px">52</div>
<div class="ln" style="left:384px;top:934px">53</div>
<div class="ln" style="left:384px;top:950px">54</div>
<div class="ln" style="left:384px;top:966px">55</div>
<div class="ln" style="left:384px;top:982px">56</div>
<div class="ln" style="left:384px;top:998px">57</div>
<div class="ln" style="left:384px;top:1014px">58</div>
<div class="ln" style="left:384px;top:1030px">59</div>
<div class="ln" style="left:384px;top:1046px;color:#c2c2bf">60</div>
<div class="ln" style="left:384px;top:1062px">61</div>
<div class="ln" style="left:384px;top:1078px">62</div>
<div class="ln" style="left:384px;top:1094px">63</div>
<div class="ln" style="left:384px;top:1110px">64</div>
<div class="ln" style="left:384px;top:1126px">65</div>
<div class="ln" style="left:384px;top:1142px">66</div>
<div class="ln" style="left:384px;top:1158px">67</div>
<div class="ln" style="left:384px;top:1174px">68</div>
<div class="ln" style="left:384px;top:1190px">69</div>
<div class="ln" style="left:384px;top:1206px">70</div>
<div class="ln" style="left:384px;top:1222px">71</div>
<div class="ln" style="left:384px;top:1238px">72</div>
<div class="ln" style="left:384px;top:1254px">73</div>
<div class="ln" style="left:384px;top:1270px">74</div>
<div class="ln" style="left:384px;top:1286px">75</div>
<div class="ln" style="left:384px;top:1302px">76</div>
<div class="ln" style="left:384px;top:1318px">77</div>
<div class="ln" style="left:384px;top:1334px">78</div>
<div class="ln" style="left:384px;top:1350px">79</div>
<div class="ln" style="left:384px;top:1366px">80</div>
<div class="ln" style="left:384px;top:1382px">81</div>
<div class="ln" style="left:384px;top:1398px">82</div>
<div class="ln" style="left:384px;top:1414px">83</div>
<div class="ln" style="left:384px;top:1430px">84</div>
<div class="ln" style="left:384px;top:1446px">85</div>
<div class="ln" style="left:384px;top:1462px">86</div>
<div class="ln" style="left:384px;top:1478px">87</div>
</div>
<div class="a" style="left:712.2px;top:1046px;width:7px;height:16px;border:1px solid #8f8f8a"></div>
<div class="a" style="left:850.8px;top:1046px;width:7px;height:16px;border:1px solid #8f8f8a"></div>
<div class="a" style="left:3645px;top:86px;width:1px;height:1537px;background:#3a3b35"></div>
<div class="a" style="left:3646px;top:588px;width:4px;height:2px;background:#c8c8c8"></div>
<div class="a" style="left:387px;top:1623px;width:3263px;height:1px;background:#4b4c45"></div>
<div class="a" style="left:387px;top:1624px;width:3263px;height:513px;background:#272822"></div>
<div class="t" style="left:407px;top:1634px;font-size:10.1px;color:#85857c">PROBLEMS</div>
<div class="t" style="left:481px;top:1634px;font-size:10.1px;color:#85857c">OUTPUT</div>
<div class="t" style="left:542px;top:1634px;font-size:10.1px;color:#e7e7e7">TERMINAL</div>
<div class="a" style="left:542px;top:1654px;width:51px;height:1px;background:#a8a8a0"></div>
<div class="a" style="left:3329px;top:1631px;width:160px;height:21px;background:#414339"></div>
<div class="t" style="left:3334px;top:1634px;font-size:12.4px;color:#f0f0f0;width:136px;overflow:hidden">3: PowerShell Integrated Console</div>
<svg class="ic" style="left:3475px;top:1638px" width="7" height="6" viewBox="0 0 7 6"><path d="M0 0H7L3.5 6Z" fill="#f0f0f0"/></svg>
<svg class="ic" style="left:3507px;top:1636px" width="12" height="12" viewBox="0 0 12 12"><path d="M6 0.5V11.5M0.5 6H11.5" stroke="#d8d8d8" stroke-width="2.4"/></svg>
<svg class="ic" style="left:3538px;top:1636px" width="14" height="12" viewBox="0 0 14 12"><path d="M0.7 1H13.3V11.3H0.7Z M7 1V11.3" fill="none" stroke="#d8d8d8" stroke-width="1.4"/></svg>
<svg class="ic" style="left:3571px;top:1635px" width="12" height="14" viewBox="0 0 12 14"><path d="M0.5 2.5H11.5M4 2.5V0.8H8V2.5" fill="none" stroke="#d8d8d8" stroke-width="1.4"/><path d="M1.5 3.5H10.5V13.5H1.5Z" fill="#d8d8d8"/><path d="M4 5V12M6 5V12M8 5V12" stroke="#272822" stroke-width="0.9"/></svg>
<svg class="ic" style="left:3602px;top:1638px" width="14" height="8" viewBox="0 0 14 8"><path d="M0.8 7.2L7 1L13.2 7.2" fill="none" stroke="#d8d8d8" stroke-width="1.5"/></svg>
<svg class="ic" style="left:3636px;top:1637px" width="10" height="10" viewBox="0 0 10 10"><path d="M1 1L9 9M9 1L1 9" stroke="#d8d8d8" stroke-width="2.2"/></svg>
<div class="a mono" style="left:407px;top:1661px;font-size:12px;letter-spacing:-1.2px;color:#cfcfc8">
<div class="tl" style="top:0px;color:#e2e22e">VERBOSE: Importing alias 'Remove-Permission'.</div>
<div class="tl" style="top:14px;color:#e2e22e">VERBOSE: Importing alias 'Remove-StringLatinCharacters'.</div>
<div class="tl" style="top:28px;color:#e2e22e">VERBOSE: Importing alias 'Set-ADUserName'.</div>
<div class="tl" style="top:42px;color:#e2e22e">VERBOSE: Importing alias 'Set-ADUserSettingGAL'.</div>
<div class="tl" style="top:56px;color:#e2e22e">VERBOSE: Importing alias 'Set-ADUserStatus'.</div>
<div class="tl" style="top:70px;color:#e2e22e">VERBOSE: Importing alias 'Set-EmailBodyTableReplacement'.</div>
<div class="tl" style="top:84px;color:#e2e22e">VERBOSE: Importing alias 'Set-Inheritance'.</div>
<div class="tl" style="top:98px;color:#e2e22e">VERBOSE: Importing alias 'Set-Permission'.</div>
<div class="tl" style="top:112px">PS C:\Users\pklys\OneDrive - Evotec\Support\GitHub\PSSharedGoods\Publish&gt; c:\Users\pklys\OneDrive - Evotec\Support\GitHub\PSSharedGoods\Public\ActiveDirectory\Find-ServerTypes.ps1</div>
<div class="tl" style="top:168px">Name             FQDN                          OperatingSystem                            DistinguishedName                                                     Enabled IsExchange IsSql  IsVM IsHyperV IsSPHyperV IsRDSLicense  IsDC IsADConnect Forest        Domain        ServicePrincipalName                                                                                                                           ServiceConnectionPoint</div>
<div class="tl" style="top:182px">----             ----                          ---------------                            -----------------                                                     ------- ---------- -----  ---- -------- ---------- ------------  ---- ----------- ------        ------        --------------------                                                                                                                           ----------------------</div>
<div class="tl" style="top:196px">AD1              AD1.ad.evotec.xyz             Windows Server 2016 Standard               CN=AD1,OU=Domain Controllers,DC=ad,DC=evotec,DC=xyz                      True      False False  True    False      False        False  True       False ad.evotec.xyz ad.evotec.xyz Dfsr-12F9A27C-BF97-4787-9364-D31B6C55EB04,DNS,E3514235-4B06-11D1-AB04-00C04FC2DCD2,exchangeAB,GC,HOST,ldap,RestrictedKrbHost,RPC,TERMSRV,WSMAN Windows Virtual Machine</div>
<div class="tl" style="top:210px">EVO1             EVO1.ad.evotec.xyz            Windows 10 Enterprise                      CN=EVO1,OU=Computers,OU=Production,DC=ad,DC=evotec,DC=xyz                True      False  True False    False      False        False False       False ad.evotec.xyz ad.evotec.xyz HOST,MSSQLSvc,RestrictedKrbHost,TERMSRV,WSMAN</div>
<div class="tl" style="top:224px">AD2              AD2.ad.evotec.xyz             Windows Server 2016 Standard               CN=AD2,OU=Domain Controllers,DC=ad,DC=evotec,DC=xyz                      True      False False  True    False      False        False  True       False ad.evotec.xyz ad.evotec.xyz Dfsr-12F9A27C-BF97-4787-9364-D31B6C55EB04,DNS,E3514235-4B06-11D1-AB04-00C04FC2DCD2,exchangeAB,GC,HOST,ldap,RestrictedKrbHost,RPC,TERMSRV,WSMAN Windows Virtual Machine</div>
<div class="tl" style="top:238px">EX2016X1         EX2016X1.ad.evotec.xyz        Windows Server 2016 Standard               CN=EX2016X1,OU=Computers,OU=Production,DC=ad,DC=evotec,DC=xyz            True      False False  True    False      False        False False       False ad.evotec.xyz ad.evotec.xyz HOST,RestrictedKrbHost,TERMSRV,WSMAN                                                                                                           Windows Virtual Machine</div>
<div class="tl" style="top:252px">DESKTOP-CQESSGI  DESKTOP-CQESSGI.ad.evotec.xyz Windows 10 Pro                             CN=DESKTOP-CQESSGI,OU=Computers,OU=Production,DC=ad,DC=evotec,DC=xyz     True      False False  True    False      False        False False       False ad.evotec.xyz ad.evotec.xyz HOST,RestrictedKrbHost,TERMSRV                                                                                                                 Windows Virtual Machine</div>
<div class="tl" style="top:266px">DESKTOP-68J4BAT  DESKTOP-68J4BAT.ad.evotec.xyz Windows 10 Pro N                           CN=DESKTOP-68J4BAT,OU=Computers,OU=Production,DC=ad,DC=evotec,DC=xyz     True      False False  True    False      False        False False       False ad.evotec.xyz ad.evotec.xyz HOST,RestrictedKrbHost,TERMSRV                                                                                                                 Windows Virtual Machine</div>
<div class="tl" style="top:280px">EX2013X1         EX2013X1.ad.evotec.xyz        Windows Server 2016 Standard               CN=EX2013X1,OU=Computers,OU=Production,DC=ad,DC=evotec,DC=xyz            True      False False  True    False      False        False False       False ad.evotec.xyz ad.evotec.xyz HOST,RestrictedKrbHost,TERMSRV,WSMAN                                                                                                           Windows Virtual Machine</div>
<div class="tl" style="top:294px">EX2013X2         EX2013X2.ad.evotec.xyz        Windows Server 2016 Standard               CN=EX2013X2,OU=Computers,OU=Production,DC=ad,DC=evotec,DC=xyz            True      False False  True    False      False        False False       False ad.evotec.xyz ad.evotec.xyz HOST,RestrictedKrbHost,TERMSRV                                                                                                                 Windows Virtual Machine</div>
<div class="tl" style="top:308px">EX2013X3         EX2013X3.ad.evotec.xyz        Windows Server 2012 R2 Standard Evaluation CN=EX2013X3,OU=Computers,OU=Production,DC=ad,DC=evotec,DC=xyz            True       True False  True    False      False        False False       False ad.evotec.xyz ad.evotec.xyz exchangeAB,exchangeMDB,exchangeRFR,HOST,IMAP,IMAP4,POP,POP3,RestrictedKrbHost,SMTP,SmtpSvc,TERMSRV,WSMAN                                       Windows Virtual Machine</div>
<div class="tl" style="top:322px">Test2                                                                                     CN=Test2,OU=Computers,OU=Production,DC=ad,DC=evotec,DC=xyz               True      False False False    False      False        False False       False ad.evotec.xyz ad.evotec.xyz</div>
<div class="tl" style="top:336px">Test4                                                                                     CN=Test4,OU=Computers,OU=Production,DC=ad,DC=evotec,DC=xyz               True      False False False    False      False        False False       False ad.evotec.xyz ad.evotec.xyz</div>
<div class="tl" style="top:350px">Test5                                                                                     CN=Test5,OU=Computers,OU=Production,DC=ad,DC=evotec,DC=xyz              False      False False False    False      False        False False       False ad.evotec.xyz ad.evotec.xyz</div>
<div class="tl" style="top:364px">TestingDSInstall                                                                          CN=TestingDSInstall,OU=Computers,OU=Production,DC=ad,DC=evotec,DC=xyz    True      False False False    False      False        False False       False ad.evotec.xyz ad.evotec.xyz</div>
<div class="tl" style="top:378px">ADCONNECT        ADConnect.ad.evotec.xyz       Windows Server 2016 Standard               CN=ADCONNECT,CN=Computers,DC=ad,DC=evotec,DC=xyz                         True      False False  True    False      False        False False        True ad.evotec.xyz ad.evotec.xyz HOST,RestrictedKrbHost,TERMSRV,WSMAN                                                                                                           Windows Virtual Machine</div>
<div class="tl" style="top:392px">ADFS2019         ADFS2019.ad.evotec.xyz        Windows Server 2019 Standard Evaluation    CN=ADFS2019,CN=Computers,DC=ad,DC=evotec,DC=xyz                          True      False False  True    False      False        False False       False ad.evotec.xyz ad.evotec.xyz HOST,RestrictedKrbHost,TERMSRV,WSMAN                                                                                                           Windows Virtual Machine</div>
<div class="tl" style="top:406px">ADPREVIEW2019    ADPreview2019.ad.evotec.pl    Windows Server 2019 Standard               CN=ADPREVIEW2019,OU=Domain Controllers,DC=ad,DC=evotec,DC=pl             True      False False  True    False      False        False  True       False ad.evotec.xyz ad.evotec.pl  Dfsr-12F9A27C-BF97-4787-9364-D31B6C55EB04,DNS,E3514235-4B06-11D1-AB04-00C04FC2DCD2,exchangeAB,GC,HOST,ldap,RestrictedKrbHost,RPC,TERMSRV       Windows Virtual Machine</div>
<div class="tl" style="top:420px">ADRODC           ADRODC.ad.evotec.pl           Windows Server 2016 Standard               CN=ADRODC,OU=Domain Controllers,DC=ad,DC=evotec,DC=pl                    True      False False  True    False      False        False False       False ad.evotec.xyz ad.evotec.pl  Dfsr-12F9A27C-BF97-4787-9364-D31B6C55EB04,exchangeAB,GC,HOST,ldap,RestrictedKrbHost,RPC,TERMSRV                                                Windows Virtual Machine</div>
<div class="tl" style="top:462px">PS C:\Users\pklys\OneDrive - Evotec\Support\GitHub\PSSharedGoods\Public\ActiveDirectory&gt; </div>
</div>
<div class="a" style="left:941px;top:2124px;width:6px;height:13px;border:1px solid #d0d0d0"></div>
<div class="a" style="left:0;top:2137px;width:3650px;height:22px;background:#414339"></div>
<svg class="ic" style="left:14px;top:2141px" width="11" height="14" viewBox="0 0 11 14"><circle cx="2.5" cy="2.5" r="1.7" fill="none" stroke="#f0f0f0" stroke-width="1.3"/><circle cx="8.5" cy="4.5" r="1.7" fill="none" stroke="#f0f0f0" stroke-width="1.3"/><path d="M2.5 4.2V14M8.5 6.2Q8.5 9 2.5 10" fill="none" stroke="#f0f0f0" stroke-width="1.3"/></svg>
<div class="t" style="left:27px;top:2141px;font-size:11.8px;color:#f0f0f0">master*</div>
<svg class="ic" style="left:82px;top:2143px" width="12" height="12" viewBox="0 0 12 12"><path d="M10.5 5A4.5 4.5 0 0 0 2 3.5M1.5 7A4.5 4.5 0 0 0 10 8.5" fill="none" stroke="#f0f0f0" stroke-width="1.6"/><path d="M1 1V4.5H4.5M11 11V7.5H7.5" fill="none" stroke="#f0f0f0" stroke-width="1.3"/></svg>
<svg class="ic" style="left:106px;top:2143px" width="12" height="12" viewBox="0 0 12 12"><circle cx="6" cy="6" r="5" fill="none" stroke="#f0f0f0" stroke-width="1.4"/><path d="M3.8 3.8L8.2 8.2M8.2 3.8L3.8 8.2" stroke="#f0f0f0" stroke-width="1.4"/></svg>
<div class="t" style="left:120px;top:2141px;font-size:11.8px;color:#f0f0f0">0</div>
<svg class="ic" style="left:132px;top:2143px" width="11" height="11" viewBox="0 0 11 11"><path d="M5.5 0.5L10.5 10.5H0.5Z" fill="#f0f0f0"/></svg>
<div class="t" style="left:146px;top:2141px;font-size:11.8px;color:#f0f0f0">0</div>
<svg class="ic" style="left:165px;top:2143px" width="12" height="12" viewBox="0 0 12 12"><circle cx="6" cy="6" r="5" fill="none" stroke="#f0f0f0" stroke-width="1.4"/><path d="M6 3V6.5H9" fill="none" stroke="#f0f0f0" stroke-width="1.4"/></svg>
<div class="t" style="left:3268px;top:2141px;font-size:11.8px;color:#f0f0f0">Ln 60, Col 63</div>
<div class="t" style="left:3351px;top:2141px;font-size:11.8px;color:#f0f0f0">Spaces: 4</div>
<div class="t" style="left:3415px;top:2141px;font-size:11.8px;color:#f0f0f0">UTF-8</div>
<div class="t" style="left:3461px;top:2141px;font-size:11.8px;color:#f0f0f0">CRLF</div>
<div class="t" style="left:3503px;top:2141px;font-size:11.8px;color:#f0f0f0">PowerShell</div>
<svg class="ic" style="left:3575px;top:2141px" width="13" height="12" viewBox="0 0 13 12"><rect x="0.7" y="0.7" width="11.6" height="10.6" fill="none" stroke="#89d185" stroke-width="1.3"/><path d="M3 3L6 5.5L3 8M6.5 8.5H10" fill="none" stroke="#89d185" stroke-width="1.3"/></svg>
<div class="t" style="left:3591px;top:2141px;font-size:11.8px;color:#89d185">5.1</div>
<svg class="ic" style="left:3619px;top:2141px" width="12" height="12" viewBox="0 0 12 12"><path d="M6 0.5Q10 0.5 10 6V9.5H2V6Q2 0.5 6 0.5Z" fill="#f0f0f0"/></svg>
<div class="t" style="left:3635px;top:2141px;font-size:11.8px;color:#f0f0f0">2</div>
</body></html>
